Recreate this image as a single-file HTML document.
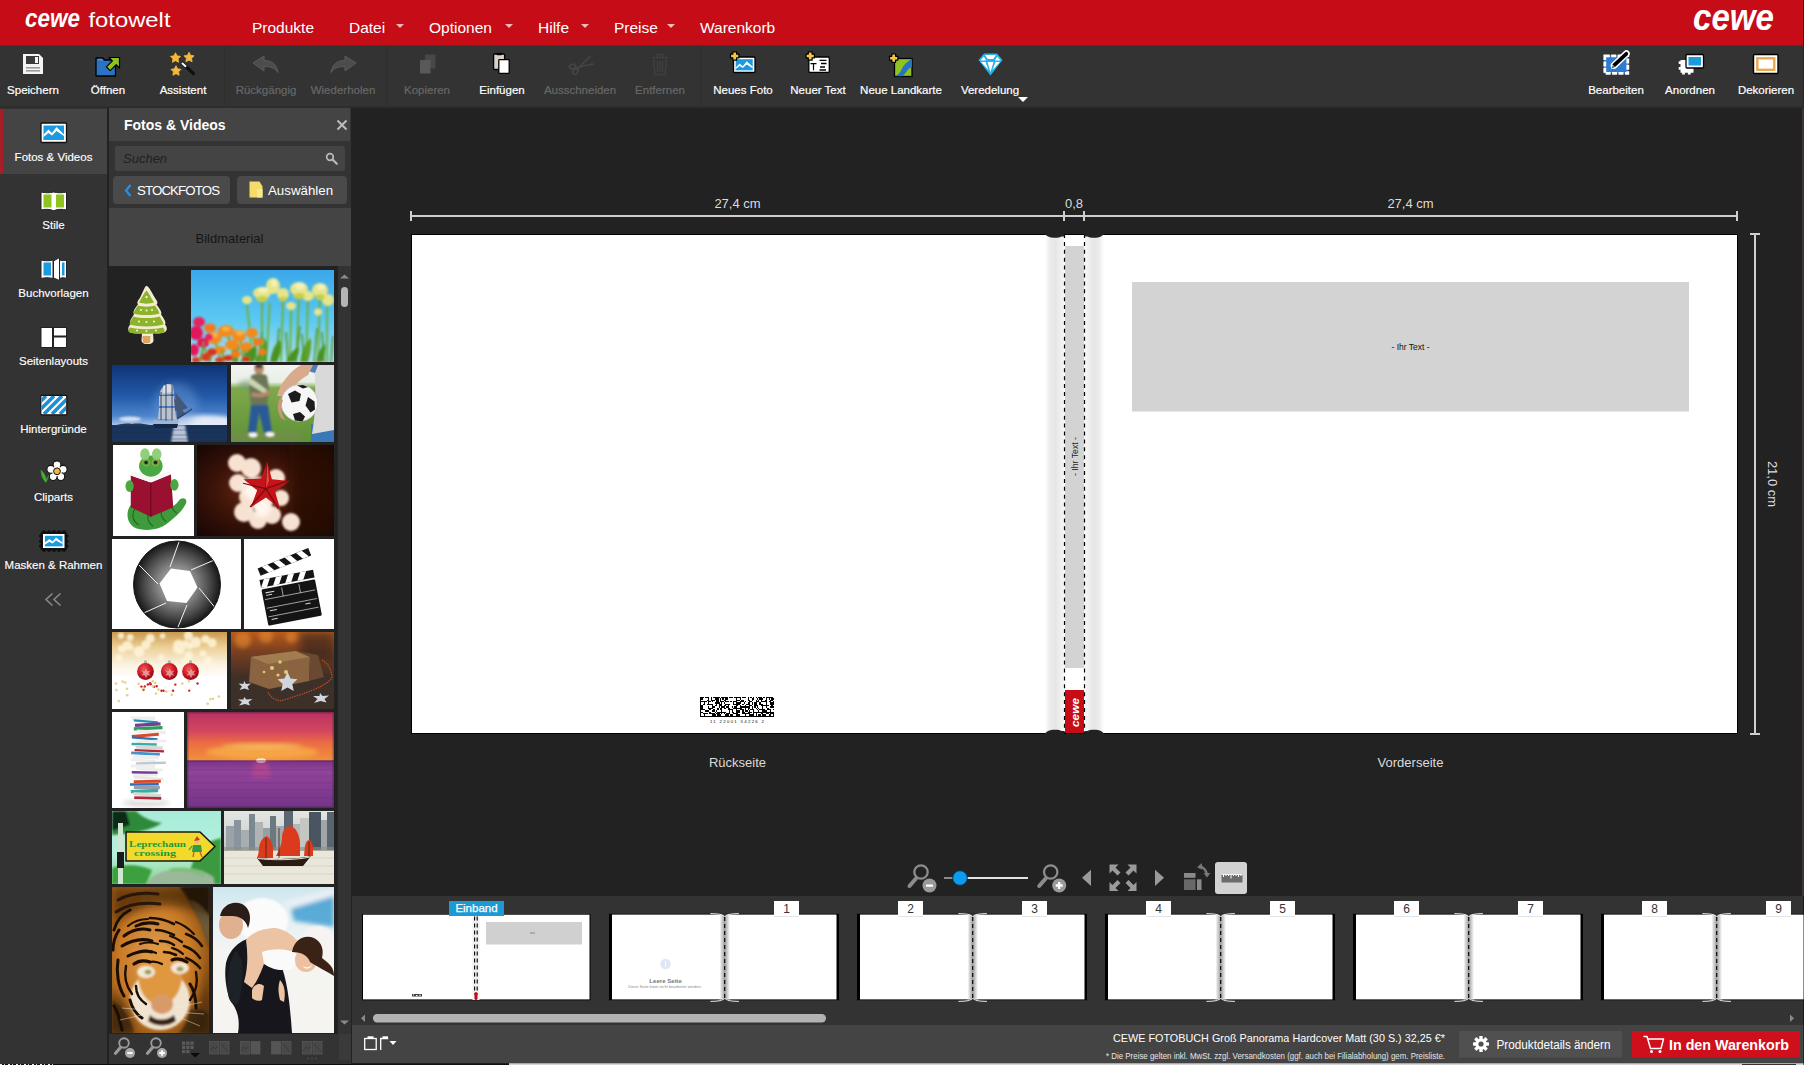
<!DOCTYPE html>
<html lang="de">
<head>
<meta charset="utf-8">
<title>CEWE Fotowelt</title>
<style>
*{box-sizing:border-box;margin:0;padding:0}
html,body{width:1804px;height:1065px;overflow:hidden;background:#222;font-family:"Liberation Sans",sans-serif;color:#fff}
.abs{position:absolute}
#app{position:relative;width:1804px;height:1065px;overflow:hidden;background:#222}
/* top bar */
#topbar{left:0;top:0;width:1804px;height:45px;background:#c60c17}
.menu{position:absolute;top:19px;font-size:15.5px;line-height:18px;color:#fff;white-space:nowrap}
.caret{position:absolute;top:24px;width:0;height:0;border-left:4px solid transparent;border-right:4px solid transparent;border-top:4px solid #f3b9bd}
/* toolbar */
#toolbar{left:0;top:45px;width:1804px;height:63px;background:#333;box-shadow:inset 0 1px 0 #7d1a1f,inset 0 -2px 0 #2d2d2d}
.tb{-webkit-text-stroke:.2px;position:absolute;top:37px;height:16px;line-height:16px;font-size:11.5px;color:#fff;text-align:center;white-space:nowrap;transform:translateX(-50%)}
.tb.dis{color:#686868}
.tbsep{position:absolute;top:2px;width:1px;height:58px;background:#2e2e2e}
.ico{position:absolute}
/* sidebar */
#sidebar{left:0;top:108px;width:107px;height:957px;background:#333}
.sb{-webkit-text-stroke:.15px;position:absolute;left:0;width:107px;text-align:center;font-size:11.5px;line-height:14px;color:#fff;white-space:nowrap}
/* panel */
#panel{left:109px;top:108px;width:242px;height:957px;background:#333}
/* canvas */
#canvas{left:352px;top:108px;width:1452px;height:788px;background:#222}
/* filmstrip */
#film{left:352px;top:896px;width:1452px;height:129px;background:#333}
/* status */
#status{left:352px;top:1025px;width:1452px;height:40px;background:#444}
</style>
</head>
<body>
<div id="app">

<!-- ===== TOP BAR ===== -->
<div id="topbar" class="abs">
  <span class="menu" style="left:252px">Produkte</span>
  <span class="menu" style="left:349px">Datei</span><i class="caret" style="left:396px"></i>
  <span class="menu" style="left:429px">Optionen</span><i class="caret" style="left:505px"></i>
  <span class="menu" style="left:538px">Hilfe</span><i class="caret" style="left:581px"></i>
  <span class="menu" style="left:614px">Preise</span><i class="caret" style="left:667px"></i>
  <span class="menu" style="left:700px">Warenkorb</span>
  <svg class="abs" style="left:0;top:0" width="1804" height="45" viewBox="0 0 1804 45" font-family="'Liberation Sans',sans-serif">
    <text x="25" y="27" font-size="25" font-weight="bold" font-style="italic" fill="#fff" textLength="55" lengthAdjust="spacingAndGlyphs">cewe</text>
    <text x="88.500" y="27" font-size="19.500" fill="#fff" textLength="82" lengthAdjust="spacingAndGlyphs">fotowelt</text>
    <text x="1693" y="30" font-size="36" font-weight="bold" font-style="italic" fill="#fff" textLength="81" lengthAdjust="spacingAndGlyphs">cewe</text>
  </svg>
</div>

<div class="abs" style="left:1803px;top:0;width:1px;height:45px;background:#5e060c;z-index:5"></div>
<div class="abs" style="left:1803px;top:45px;width:1px;height:63px;background:#262626;z-index:5"></div>
<div class="abs" style="left:1801.500px;top:108px;width:2.500px;height:788px;background:#3e3530;z-index:5"></div>
<div class="abs" style="left:1803px;top:896px;width:1px;height:169px;background:rgba(0,0,0,.45);z-index:5"></div>
<!-- ===== TOOLBAR ===== -->
<div id="toolbar" class="abs">
  <span class="tb" style="left:33px">Speichern</span>
  <span class="tb" style="left:108px">Öffnen</span>
  <span class="tb" style="left:183px">Assistent</span>
  <i class="tbsep" style="left:224px"></i>
  <span class="tb dis" style="left:266px">Rückgängig</span>
  <span class="tb dis" style="left:343px">Wiederholen</span>
  <i class="tbsep" style="left:386px"></i>
  <span class="tb dis" style="left:427px">Kopieren</span>
  <span class="tb" style="left:502px">Einfügen</span>
  <span class="tb dis" style="left:580px">Ausschneiden</span>
  <span class="tb dis" style="left:660px">Entfernen</span>
  <i class="tbsep" style="left:700px"></i>
  <span class="tb" style="left:743px">Neues Foto</span>
  <span class="tb" style="left:818px">Neuer Text</span>
  <span class="tb" style="left:901px">Neue Landkarte</span>
  <span class="tb" style="left:990px">Veredelung</span>
  <span class="tb" style="left:1616px">Bearbeiten</span>
  <span class="tb" style="left:1690px">Anordnen</span>
  <span class="tb" style="left:1766px">Dekorieren</span>
  <svg class="abs" style="left:0;top:0" width="1804" height="63" viewBox="0 45 1804 63">
    <defs>
      <path id="plus" d="M2.300 0h3.800v2.300h2.300v3.800h-2.300v2.300h-3.800v-2.300h-2.300v-3.800h2.300z" fill="#f6c443" stroke="#000" stroke-width="1.200" stroke-linejoin="round"/>
      <path id="star" d="M0.0 -5.3 1.59 -2.18 5.04 -1.64 2.57 0.83 3.12 4.29 0.0 2.7 -3.12 4.29 -2.57 0.83 -5.04 -1.64 -1.59 -2.18z" fill="#f2b93c" stroke="#f2b93c" stroke-width=".8" stroke-linejoin="round"/>
    </defs>
    <!-- save -->
    <path d="M23 54h16l4 4v16h-20z" fill="#f4f4f4"/>
    <rect x="26" y="56" width="13" height="8" fill="#3a3a3a"/>
    <rect x="35" y="57" width="3" height="6" fill="#f4f4f4"/>
    <rect x="26" y="67" width="14" height="1.6" fill="#9a9a9a"/>
    <rect x="26" y="70" width="14" height="1.6" fill="#9a9a9a"/>
    <!-- open -->
    <path d="M96 58h7l1.5 2h11v16h-19.5z" fill="#2a72c4" stroke="#000" stroke-width="1.3" stroke-linejoin="round"/>
    <rect x="98" y="58.8" width="4.5" height="1.6" fill="#5b8fd6"/>
    <path d="M109 57.500h10.500v10.500l-3.300-3.300-6 6-3.800-3.800 6-6z" fill="#8fc31f" stroke="#000" stroke-width="1.2" stroke-linejoin="round"/>
    <!-- assistant -->
    <use href="#star" x="175.500" y="58"/>
    <use href="#star" x="189" y="57.500"/>
    <use href="#star" x="176" y="71"/>
    <path d="M182.500 63.500l11 10" stroke="#111" stroke-width="3.200" stroke-linecap="round"/>
    <path d="M182.500 63.500l3 2.700" stroke="#fff" stroke-width="2" stroke-linecap="round"/>
    <!-- undo -->
    <path d="M253 63l11-7v4.500c8 0 13 4 14 12-3-4.500-7-6-14-6v4.500z" fill="#4c4c4c" stroke="#5c5c5c" stroke-width="1" stroke-linejoin="round"/>
    <!-- redo -->
    <path d="M356 63l-11-7v4.500c-8 0-13 4-14 12 3-4.500 7-6 14-6v4.500z" fill="#4c4c4c" stroke="#5c5c5c" stroke-width="1" stroke-linejoin="round"/>
    <!-- copy -->
    <rect x="425" y="54.500" width="10.500" height="14" fill="#484848"/>
    <rect x="420" y="60" width="10.500" height="13.500" fill="#595959"/>
    <!-- paste -->
    <rect x="493.600" y="54" width="11" height="15.500" rx="1" fill="#d9d2c4" stroke="#000" stroke-width="1.300"/>
    <rect x="496.500" y="52.800" width="5.500" height="2.400" rx="1" fill="#000"/>
    <rect x="498.800" y="59.600" width="10.400" height="13.800" rx="0.800" fill="#fff" stroke="#000" stroke-width="1.300"/>
    <!-- cut -->
    <g fill="none" stroke="#464646" stroke-width="1.600" stroke-linecap="round">
      <path d="M590 56.500l-13 13"/><path d="M593 64l-17 3.500"/>
      <ellipse cx="572.500" cy="66.500" rx="3.200" ry="2.200" transform="rotate(-20 572.500 66.500)"/>
      <ellipse cx="575.500" cy="71.300" rx="3.200" ry="2.200" transform="rotate(-50 575.500 71.300)"/>
    </g>
    <!-- trash -->
    <g fill="none" stroke="#3f3f3f" stroke-width="1.500">
      <path d="M652 57.500h16"/><path d="M657 57v-2.500h6v2.500"/>
      <path d="M653.500 58.500l1.500 16h10l1.500-16"/><path d="M657.500 61v11M660 61v11M662.500 61v11"/>
    </g>
    <!-- neues foto -->
    <rect x="733.500" y="57" width="21.500" height="15.500" rx="1" fill="#fff" stroke="#000" stroke-width="1.300"/>
    <rect x="735.700" y="59.200" width="17" height="11" fill="#1b9ae0"/>
    <path d="M735.700 67.500l4-4 3 2.800 4-5 6 5.500v3.400h-17z" fill="#fff"/>
    <path d="M735.700 69l4-3 3 2 4-3.600 6 3.800v2h-17z" fill="#1b9ae0"/>
    <use href="#plus" x="730.500" y="51.800"/>
    <!-- neuer text -->
    <rect x="808.800" y="57" width="20.500" height="15.300" rx="1" fill="#fff" stroke="#000" stroke-width="1.300"/>
    <path d="M810.500 63h6v1.200h-2.400v6h-1.200v-6h-2.400z" fill="#000"/>
    <path d="M819.500 60.300h7M821 63.500h5.500M820 67h5M819.500 70h6.500" stroke="#000" stroke-width="1.300"/>
    <use href="#plus" x="806" y="51.800"/>
    <!-- neue landkarte -->
    <rect x="894.500" y="58.500" width="17.500" height="18" fill="#8fc31f" stroke="#000" stroke-width="1.300"/>
    <path d="M912 59.200v8c-5 1-6 7-10 9h-7c6-2 6-8 10-12 2.500-2.500 4-4 7-5z" fill="#2a72c4"/>
    <use href="#plus" x="889.500" y="54"/>
    <!-- veredelung -->
    <path d="M984 53.500h13l5.500 6.500-12 15.500-12-15.500z" fill="#27b3ea"/>
    <path d="M985 55h11l-2.700 4h-5.600zM980.500 60.500l3.300-4 2.300 4zM1000.500 60.500l-3.300-4-2.300 4zM987.500 62h6l-3 10zM981 62h4.500l3 8zM1000 62h-4.500l-3 8z" fill="#fff"/>
    <path d="M1018 97h10l-5 5z" fill="#fff"/>
    <!-- bearbeiten -->
    <rect x="1604" y="55" width="24" height="18.500" fill="#2e7bd0"/>
    <rect x="1604.800" y="55.800" width="23" height="17.500" fill="none" stroke="#fff" stroke-width="2.800" stroke-dasharray="5 1.400"/>
    <path d="M1614 65.500l12.500-12" stroke="#fff" stroke-width="6.600" stroke-linecap="round"/>
    <path d="M1614.300 65.200l12-11.400" stroke="#000" stroke-width="3.800" stroke-linecap="round"/>
    <path d="M1611.500 68.500l1-3.500 2.500 2.500z" fill="#000" stroke="#fff" stroke-width=".8"/>
    <!-- anordnen -->
    <path d="M1680.500 60h13v12.800h-2.800v1.700h-2.800v-1.700h-3v1.700h-2.800v-1.700h-1.600v-3h-1.800v-2.800h1.800v-3h-1.800v-2.800h1.800z" fill="#fff"/>
    <rect x="1686" y="54.500" width="17.500" height="13.500" rx="1" fill="#fff" stroke="#000" stroke-width="1.300"/>
    <rect x="1688.500" y="57" width="12.500" height="8.500" fill="#1b9ae0"/>
    <!-- dekorieren -->
    <rect x="1753.500" y="54.500" width="24.500" height="19" rx="1" fill="#fff" stroke="#000" stroke-width="1.400"/>
    <rect x="1757.300" y="58.300" width="17" height="11.500" fill="#fff" stroke="#e9a94b" stroke-width="2.400"/>
  </svg>
</div>

<!-- ===== SIDEBAR ===== -->
<div id="sidebar" class="abs">
  <div class="abs" style="left:0;top:1px;width:107px;height:65px;background:#444;border-left:3px solid #a51e28"></div>
  <div class="sb" style="top:42px">Fotos &amp; Videos</div>
  <div class="sb" style="top:110px">Stile</div>
  <div class="sb" style="top:178px">Buchvorlagen</div>
  <div class="sb" style="top:246px">Seitenlayouts</div>
  <div class="sb" style="top:314px">Hintergründe</div>
  <div class="sb" style="top:382px">Cliparts</div>
  <div class="sb" style="top:450px">Masken &amp; Rahmen</div>
  <svg class="abs" style="left:0;top:0" width="107" height="520" viewBox="0 108 107 520">
    <!-- fotos -->
    <rect x="41" y="123" width="25.500" height="19.500" rx="1" fill="#fff" stroke="#111" stroke-width="1.300"/>
    <rect x="43.500" y="125.500" width="20.500" height="14.500" fill="#1b9ae0"/>
    <path d="M43.500 134.500l5-5 3.500 3.500 4.500-6 7.500 7.500v5.500h-20.500z" fill="#fff"/>
    <path d="M43.500 137l5-4 3.500 2.500 4.500-4.500 7.500 5v4h-20.500z" fill="#1b9ae0"/>
    <!-- stile -->
    <path d="M41 192c4 1 9 1 12.700 0 3.600 1 8.700 1 12.800 0v18c-4-1-9-1-12.800.8-3.700-1.800-8.700-1.800-12.700-.8z" fill="#fff" stroke="#222" stroke-width="1"/>
    <rect x="43.500" y="194.500" width="8" height="13" fill="#8fc31f"/><rect x="56" y="194.500" width="8" height="13" fill="#8fc31f"/>
    <!-- buchvorlagen -->
    <path d="M41 260c4 1 8 1 12 0v18.500c-4-1-8-1-12 0z" fill="#fff" stroke="#222" stroke-width="1"/>
    <path d="M53.500 261l6-3.500v23l-6-2.500z" fill="#fff" stroke="#222" stroke-width="1"/>
    <path d="M59.500 260c2.500.8 5 .8 7 0v18.500c-2-1-4.500-1-7 0z" fill="#fff" stroke="#222" stroke-width="1"/>
    <rect x="43.500" y="262.500" width="7.500" height="13" fill="#1b9ae0"/><rect x="62" y="262.500" width="2.500" height="13" fill="#1b9ae0"/>
    <!-- seitenlayouts -->
    <rect x="40.500" y="327" width="26.500" height="21" rx="1.200" fill="#222"/>
    <rect x="41.500" y="328" width="10.500" height="19" fill="#fff"/><rect x="54" y="328" width="12" height="7.500" fill="#fff"/><rect x="54" y="337.500" width="12" height="9.500" fill="#fff"/>
    <!-- hintergruende -->
    <clipPath id="hgc"><rect x="41.500" y="396" width="24.500" height="18"/></clipPath>
    <rect x="40.800" y="395.300" width="26" height="19.500" rx="1" fill="#fff" stroke="#111" stroke-width="1.200"/>
    <g clip-path="url(#hgc)" stroke="#1b8fd8" stroke-width="3.600"><path d="M36 414l18-18M44 414l18-18M52 414l18-18M60 414l18-18M28 414l18-18"/></g>
    <!-- cliparts -->
    <path d="M41 470c0 6 2 10 5 12.500 1.500-3 3.500-8 5.500-10-2.500 2-4 4.500-5 7-1-4-3-7.500-5.500-9.500z" fill="#4caf3a" stroke="#2e8a28" stroke-width=".8"/>
    <g fill="#fff" stroke="#111" stroke-width="1.100"><circle cx="57" cy="464.800" r="3.900"/><circle cx="63.200" cy="469.300" r="3.900"/><circle cx="60.800" cy="476.600" r="3.900"/><circle cx="53.200" cy="476.600" r="3.900"/><circle cx="50.800" cy="469.300" r="3.900"/></g>
    <circle cx="57" cy="471.300" r="5" fill="#fff"/>
    <circle cx="57" cy="471.300" r="3.400" fill="#f0b83a" stroke="#111" stroke-width="1"/>
    <!-- masken -->
    <rect x="40.500" y="531.500" width="26.500" height="19" rx="2" fill="#111"/>
    <g fill="#111"><circle cx="44" cy="531.500" r="1.600"/><circle cx="49" cy="531.500" r="1.600"/><circle cx="54" cy="531.500" r="1.600"/><circle cx="59" cy="531.500" r="1.600"/><circle cx="64" cy="531.500" r="1.600"/><circle cx="44" cy="550.500" r="1.600"/><circle cx="49" cy="550.500" r="1.600"/><circle cx="54" cy="550.500" r="1.600"/><circle cx="59" cy="550.500" r="1.600"/><circle cx="64" cy="550.500" r="1.600"/><circle cx="40.500" cy="536" r="1.600"/><circle cx="40.500" cy="541" r="1.600"/><circle cx="40.500" cy="546" r="1.600"/><circle cx="67" cy="536" r="1.600"/><circle cx="67" cy="541" r="1.600"/><circle cx="67" cy="546" r="1.600"/></g>
    <rect x="43" y="534" width="21.500" height="14" fill="#fff"/>
    <rect x="45" y="535.800" width="17.500" height="10.400" fill="#1b9ae0"/>
    <path d="M45 542.500l4.500-3.500 3 2.500 3.500-4 6.500 5v3.700h-17.500z" fill="#fff"/>
    <path d="M45 544.500l4.500-2.800 3 1.800 3.500-3 6.500 3.500v2.200h-17.500z" fill="#1b9ae0"/>
    <!-- collapse -->
    <path d="M52.500 593.500l-6.500 6 6.500 6M60.500 593.500l-6.500 6 6.500 6" fill="none" stroke="#8c8c8c" stroke-width="1.500"/>
  </svg>
</div>

<!-- ===== PANEL ===== -->
<div id="panel" class="abs">
  <div class="abs" style="left:0;top:0;width:241px;height:33px;background:#444"></div>
  <div class="abs" style="left:15px;top:8px;font-size:14px;line-height:18px;font-weight:bold;color:#fff;white-space:nowrap">Fotos &amp; Videos</div>
  <svg class="abs" style="left:227px;top:11px" width="12" height="12" viewBox="0 0 12 12"><path d="M1.500 1.500l9 9M10.500 1.500l-9 9" stroke="#bdbdbd" stroke-width="2"/></svg>
  <div class="abs" style="left:6px;top:38px;width:230px;height:25px;background:#444;border-radius:2px"></div>
  <div class="abs" style="left:14px;top:43px;font-size:13px;line-height:16px;font-style:italic;color:#1f1f1f">Suchen</div>
  <svg class="abs" style="left:216px;top:44px" width="14" height="14" viewBox="0 0 14 14"><circle cx="5" cy="5" r="3.300" fill="none" stroke="#b8b8b8" stroke-width="1.700"/><path d="M7.500 7.500l4.300 4.300" stroke="#b8b8b8" stroke-width="2.200" stroke-linecap="round"/></svg>
  <div class="abs" style="left:4px;top:68px;width:117px;height:28px;background:#4a4a4a;border-radius:4px"></div>
  <svg class="abs" style="left:15px;top:76px" width="8" height="13" viewBox="0 0 8 13"><path d="M6.500 1L2 6.500 6.500 12" fill="none" stroke="#2b8fe0" stroke-width="2.200"/></svg>
  <div class="abs" style="left:28px;top:74px;font-size:13.300px;line-height:17px;color:#fff;white-space:nowrap;letter-spacing:-.9px">STOCKFOTOS</div>
  <div class="abs" style="left:128px;top:68px;width:110px;height:28px;background:#4a4a4a;border-radius:4px"></div>
  <svg class="abs" style="left:140px;top:73px" width="14" height="17" viewBox="0 0 14 17"><path d="M.5.500h10l3 5v11h-13z" fill="#f5dc6a"/><path d="M8 8h5.500v8.500h-5.500z" fill="#f9e88e"/></svg>
  <div class="abs" style="left:159px;top:74px;font-size:13.300px;line-height:17px;color:#fff;white-space:nowrap">Auswählen</div>
  <div class="abs" style="left:0;top:100px;width:242px;height:58px;background:#444"></div>
  <div class="abs" style="left:0;top:123px;width:241px;text-align:center;font-size:13px;line-height:16px;color:#161616">Bildmaterial</div>
  <div class="abs" style="left:0;top:158px;width:242px;height:768px;background:#222"></div>
  <!-- scrollbar -->
  <div class="abs" style="left:229px;top:158px;width:13px;height:768px;background:#333"></div>
  <div class="abs" style="left:232px;top:179px;width:7px;height:20px;border-radius:3.500px;background:#b5b5b5"></div>
  <svg class="abs" style="left:231px;top:165px" width="9" height="6" viewBox="0 0 9 6"><path d="M0 5.500h9l-4.500-4z" fill="#8a8a8a"/></svg>
  <svg class="abs" style="left:231px;top:912px" width="9" height="6" viewBox="0 0 9 6"><path d="M0 .5h9l-4.500 4z" fill="#8a8a8a"/></svg>
  <svg class="abs" style="left:0;top:158px" width="229" height="768" viewBox="109 266 229 768" font-family="'Liberation Sans',sans-serif">
    <defs>
      <filter id="b1" x="-20%" y="-20%" width="140%" height="140%"><feGaussianBlur stdDeviation="1"/></filter>
      <filter id="b2" x="-20%" y="-20%" width="140%" height="140%"><feGaussianBlur stdDeviation="2.200"/></filter>
      <filter id="b4" x="-30%" y="-30%" width="160%" height="160%"><feGaussianBlur stdDeviation="4"/></filter>
      <filter id="b05"><feGaussianBlur stdDeviation=".5"/></filter>
      <clipPath id="c2"><rect x="191" y="270" width="143" height="92"/></clipPath>
      <clipPath id="c3"><rect x="112" y="365" width="115" height="77"/></clipPath>
      <clipPath id="c4"><rect x="231" y="365" width="103" height="77"/></clipPath>
      <clipPath id="c5"><rect x="113" y="445" width="81" height="91"/></clipPath>
      <clipPath id="c6"><rect x="197" y="445" width="137" height="91"/></clipPath>
      <clipPath id="c7"><rect x="112" y="539" width="129" height="90"/></clipPath>
      <clipPath id="apc"><circle cx="177" cy="584.500" r="43"/></clipPath><clipPath id="c8"><rect x="244" y="539" width="90" height="90"/></clipPath>
      <linearGradient id="sky2" x1="0" y1="0" x2="0" y2="1"><stop offset="0" stop-color="#3aa8ea"/><stop offset=".55" stop-color="#5cc9f2"/><stop offset="1" stop-color="#a8e0f0"/></linearGradient>
      <linearGradient id="sky3" x1="0" y1="0" x2="0" y2="1"><stop offset="0" stop-color="#0f3476"/><stop offset=".4" stop-color="#2259a8"/><stop offset=".66" stop-color="#4d84cc"/><stop offset=".78" stop-color="#a9c6ea"/><stop offset="1" stop-color="#a9c6ea"/></linearGradient>
      <linearGradient id="gr4" x1="0" y1="0" x2="0" y2="1"><stop offset="0" stop-color="#f2f4f2"/><stop offset=".22" stop-color="#e8efe6"/><stop offset=".3" stop-color="#7fa84a"/><stop offset="1" stop-color="#5f9238"/></linearGradient>
      <radialGradient id="bg6" cx=".45" cy=".5" r=".7"><stop offset="0" stop-color="#6a2a14"/><stop offset=".5" stop-color="#3a1208"/><stop offset="1" stop-color="#120504"/></radialGradient>
      <radialGradient id="ap" cx=".5" cy=".5" r=".5"><stop offset="0" stop-color="#b0b0b0"/><stop offset=".4" stop-color="#8c8c8c"/><stop offset=".75" stop-color="#4a4a4a"/><stop offset="1" stop-color="#161616"/></radialGradient>
    </defs>

    <!-- 1 tree cookie -->
    <g>
      <path d="M146.500 286c2 0 4 4 8.500 12 2 3 3.500 5 1.500 6.500 3 4 6 8 4.500 10 3 4 5.500 8 4 10 3 3.500 2 7-1 8-3 1.200-8 1-11 .8l.5 7c0 3-3 3.800-6 3.800s-6-.8-6-3.800l.5-7c-4 .4-9 .4-11.500-1-3-1.500-3-5 0-8-1.500-2.500 1-6 3.500-10-1.500-2.500 1-6 4-10-1.500-2 0-3.500 2-6.500 3.500-7 5-12 6.500-12z" fill="#f3ecd2"/>
      <path d="M146.500 290.500c2 2 4 6 7.500 12-4 1.500-11 1.500-15 0 3-6 5.500-10 7.500-12zM138 305.500c5 1.500 12 1.500 17 0 2.500 3.500 4 6 4.500 8-6 2-20 2-26 0 .5-2 2-4.500 4.500-8zM133.500 316.500c7 2 19 2 26 0 2.500 3.500 4 6 4 8-8 2.500-26 2.500-34 0 0-2 1.500-4.500 4-8zM130 327.500c9 2.300 24 2.300 33 0 2.500 3 2 5-1 5.500-8 1-23 1-31 0-3-.5-3.500-2.500-1-5.500z" fill="#8db32c"/>
      <path d="M142.500 336h8l-.5 6.500c0 1-7 1-7 0z" fill="#dca660"/>
      <g fill="#f3f0d8"><circle cx="146.500" cy="297" r="1.200"/><circle cx="141" cy="310" r="1.100"/><circle cx="146.500" cy="310.500" r="1.100"/><circle cx="152" cy="310" r="1.100"/><circle cx="139" cy="321.500" r="1.100"/><circle cx="146.500" cy="322" r="1.100"/><circle cx="154" cy="321.500" r="1.100"/><circle cx="137" cy="330.500" r="1"/><circle cx="146.500" cy="331" r="1"/><circle cx="156" cy="330.500" r="1"/></g>
    </g>

    <!-- 2 flowers -->
    <g clip-path="url(#c2)">
      <rect x="191" y="270" width="143" height="92" fill="url(#sky2)"/>
      <g filter="url(#b1)">
        <g stroke="#6fae2c" stroke-width="1.800" fill="none">
          <path d="M262 300v62M270 303l-4 59M283 300l-2 62M299 296l-3 66M308 300l-2 62M320 296l-2 66M327 305v57M247 305l6 57M291 310l-1 52"/>
          <path d="M215 340l6 22M228 335l8 27M240 340l4 22M254 338l2 24M204 345l4 17" stroke="#5a9a28"/>
        </g>
        <path d="M255 362c4-12 8-18 12-22 2 8 0 16-2 22zM300 362c2-14 6-20 11-24 1 9-1 17-3 24zM232 362c-2-8 0-14 3-18 3 6 4 12 3 18z" fill="#5fa02a"/>
        <g fill="#e6e58a">
          <ellipse cx="262" cy="293" rx="9" ry="6"/><ellipse cx="273" cy="286" rx="7" ry="8"/><ellipse cx="283" cy="294" rx="6" ry="6"/>
          <ellipse cx="299" cy="289" rx="9" ry="7"/><ellipse cx="308" cy="296" rx="6" ry="5"/><ellipse cx="320" cy="290" rx="8" ry="7"/><ellipse cx="328" cy="300" rx="6" ry="6"/>
          <ellipse cx="291" cy="306" rx="5" ry="4"/><ellipse cx="318" cy="312" rx="4" ry="3.500"/><ellipse cx="247" cy="300" rx="5" ry="4"/>
        </g>
        <g fill="#f4f1b8"><ellipse cx="263" cy="290" rx="5" ry="3"/><ellipse cx="300" cy="286" rx="5" ry="3.500"/><ellipse cx="321" cy="287" rx="4" ry="3"/><ellipse cx="274" cy="283" rx="3" ry="4"/></g>
        <g fill="#c7cf4a"><ellipse cx="262" cy="299" rx="6" ry="3"/><ellipse cx="299" cy="296" rx="6" ry="3"/><ellipse cx="320" cy="297" rx="5" ry="3"/><ellipse cx="283" cy="299" rx="4" ry="2.500"/></g>
        <g fill="#f58a1e">
          <ellipse cx="214" cy="338" rx="8" ry="6"/><ellipse cx="226" cy="331" rx="8" ry="6"/><ellipse cx="239" cy="336" rx="7" ry="6"/><ellipse cx="252" cy="333" rx="6" ry="5"/><ellipse cx="232" cy="345" rx="7" ry="5"/><ellipse cx="246" cy="347" rx="6" ry="5"/><ellipse cx="220" cy="350" rx="6" ry="4"/>
        </g>
        <g fill="#fbb040"><ellipse cx="226" cy="329" rx="4" ry="2.500"/><ellipse cx="240" cy="333" rx="4" ry="2.500"/><ellipse cx="214" cy="335" rx="4" ry="2.500"/></g>
        <g fill="#e3195a"><ellipse cx="196" cy="333" rx="7" ry="7"/><ellipse cx="203" cy="343" rx="6" ry="5"/><ellipse cx="194" cy="350" rx="5" ry="6"/></g>
        <g fill="#e03a20"><ellipse cx="206" cy="357" rx="6" ry="4"/><ellipse cx="220" cy="360" rx="5" ry="3"/><ellipse cx="196" cy="360" rx="4" ry="3"/></g>
        <g stroke="#4f9426" stroke-width="1.600" fill="none"><path d="M200 362l4-20M210 362l2-14M224 362l-2-12M236 362l3-16M246 362l-1-12M258 362l4-30M266 362l-2-24M276 362l3-34M288 362l-2-30M296 362l4-36M304 362l-2-28M314 362l3-34M324 362l-2-30M331 362l2-26"/></g>
        <path d="M240 362c6-10 10-14 16-16 2 6 0 11-3 16zM270 362c2-12 5-18 10-22 2 8 0 15-3 22zM286 362c4-9 8-13 13-15 1 6-2 11-5 15zM316 362c2-10 5-15 9-18 1 7-1 13-3 18z" fill="#4a9224"/>
        <g fill="#f27a1c"><ellipse cx="210" cy="328" rx="6" ry="4.500"/><ellipse cx="258" cy="342" rx="5" ry="4"/><ellipse cx="236" cy="354" rx="5" ry="3.500"/><ellipse cx="262" cy="352" rx="4" ry="3"/></g>
        <g fill="#e6245e"><ellipse cx="199" cy="322" rx="6" ry="5"/><ellipse cx="209" cy="337" rx="4" ry="3.500"/></g>
        <g fill="#d8301c"><ellipse cx="212" cy="352" rx="5" ry="3.500"/><ellipse cx="228" cy="358" rx="5" ry="3"/><ellipse cx="246" cy="359" rx="4" ry="2.500"/></g>
      </g>
    </g>

    <!-- 3 ship -->
    <g clip-path="url(#c3)">
      <rect x="112" y="365" width="115" height="77" fill="url(#sky3)"/>
      <ellipse cx="204" cy="422" rx="34" ry="7" fill="#eef2fa" opacity=".9" filter="url(#b2)"/>
      <ellipse cx="176" cy="405" rx="22" ry="22" fill="#6f9cd8" opacity=".45" filter="url(#b4)"/>
      <ellipse cx="130" cy="419" rx="11" ry="2.600" fill="#e6eef8" opacity=".85" filter="url(#b1)"/>
      <rect x="112" y="425" width="115" height="17" fill="#183258"/>
      <path d="M112 426c8-2 14-3 20-2 6-1 12 0 18 1l6 1h-44z" fill="#20385a"/>
      <path d="M174 425h11l3 17h-17z" fill="#dfe8f4" opacity=".8" filter="url(#b1)"/>
      <g stroke="#24406a" stroke-width=".7" opacity=".6"><path d="M112 430h115M112 435h115M112 439h115"/></g>
      <g filter="url(#b05)">
        <path d="M160 392c2-5 5-7 8-8l5 1 1 9-14 1zM159 396h15l1 10h-16zM159 408h16l1 11h-18z" fill="#b9c2cf"/>
        <path d="M163 386l4-2 5 1v7l-9 1z" fill="#d8dde4"/>
        <path d="M175 392l13 16-11 4zM176 404l10 10-9 5zM174 398l8 10-7 3z" fill="#44597a"/>
        <path d="M166 383v38M172 385v36M161 392v28" stroke="#1c2c48" stroke-width=".8"/>
        <path d="M177 419l15-10" stroke="#2a3a56" stroke-width="1.100"/>
        <path d="M153 420c8 1 18 1 26 0l-2 7h-22z" fill="#9fb4d0"/>
        <path d="M153 424h25l-1 4h-22z" fill="#16284a"/>
      </g>
    </g>

    <!-- 4 soccer -->
    <g clip-path="url(#c4)">
      <rect x="231" y="365" width="103" height="77" fill="url(#gr4)"/>
      <g filter="url(#b2)" opacity=".55"><ellipse cx="246" cy="385" rx="8" ry="5" fill="#6f9a78"/><rect x="231" y="432" width="70" height="10" fill="#7a8a56"/></g>
      <g filter="url(#b1)">
        <ellipse cx="259" cy="369" rx="4.800" ry="5.500" fill="#b88a6a"/>
        <path d="M255 366c1-3 7-3 8 0l-1 2h-6z" fill="#4a3a2c"/>
        <path d="M251 376c3-3 13-3 16 0l2 12-2 18h-16l-2-18z" fill="#6b7658"/>
        <path d="M251 378l16 12-2 4-16-10z" fill="#c9d6b0"/>
        <path d="M252 392c5 2 11 2 17-2l1 4c-6 4-13 4-19 2z" fill="#b58a6c"/>
        <path d="M251 405h17l4 28h-8l-5-20-3 20h-8z" fill="#2c5a96"/>
        <ellipse cx="253" cy="435" rx="4.500" ry="2.400" fill="#f6f6f6"/><ellipse cx="270" cy="434.500" rx="4.500" ry="2.400" fill="#f6f6f6"/>
      </g>
      <path d="M311 424h23v18h-23z" fill="#3a78b8"/>
      <path d="M314 365h20v65l-22 4c4-22 4-44 2-69z" fill="#d9d9d9"/>
      <path d="M302 365h16l-3 8c-5-1-10-4-13-8z" fill="#4a80b8"/>
      <path d="M277 396c3-12 12-24 24-31l12 0-5 10c-9 5-16 12-19 22z" fill="#d9ab8c"/>
      <circle cx="299.500" cy="403" r="18.300" fill="#f6f6f6"/>
      <circle cx="299.500" cy="403" r="18.300" fill="none" stroke="#c8c8c8" stroke-width=".8"/>
      <g fill="#1c1c1c"><path d="M288 394l7-3.500 6 3.500-1.500 7-8 1.500zM308 397l6.500 4.500.5 8-4.500 3-5-7zM293 414l7-2 5 4.500-2.500 5-7.500-1zM297 385.500l6-.5 5 2-5 1.500z"/></g>
      <path d="M280 398c-3 6-3 13 1 20l5 3c-5-7-6-14-3-21z" fill="#c9977a"/>
    </g>

    <!-- 5 worm -->
    <g clip-path="url(#c5)">
      <rect x="113" y="445" width="81" height="91" fill="#fff"/>
      <g transform="translate(152 492) scale(1.18) translate(-152 -494)">
      <path d="M137 503c-8 4-8 18 2 22 10 3 22 0 28-6 6-5 12-10 14-16 1-4-4-5-6-2-4 6-10 8-16 6z" fill="#3f9a3c"/>
      <path d="M139 507c-5 4-4 12 2 15M150 510c-3 5-1 11 3 13M160 508c-1 5 1 9 4 11M168 503c0 4 2 7 5 9" stroke="#1f6a24" stroke-width="1" fill="none"/>
      <ellipse cx="151" cy="472" rx="10" ry="9" fill="#4aa843"/>
      <ellipse cx="146" cy="462" rx="4" ry="5" fill="#8fd07a"/><ellipse cx="156" cy="462" rx="4" ry="5" fill="#8fd07a"/>
      <circle cx="147" cy="469" r="1.500" fill="#222"/><circle cx="155" cy="469" r="1.500" fill="#222"/>
      <circle cx="147" cy="469" r="3" fill="none" stroke="#c9a23a" stroke-width=".7"/><circle cx="155" cy="469" r="3" fill="none" stroke="#c9a23a" stroke-width=".7"/>
      <path d="M134 480l17 6 17-7 2 28-19 8-17-8z" fill="#9a1030"/>
      <path d="M134 480l17 6 17-7-1-3-16 6-16-6z" fill="#f6f6f6"/>
      <path d="M151 486v29" stroke="#6a0a20" stroke-width="1"/>
      <ellipse cx="133" cy="489" rx="3.500" ry="5" fill="#4aa843"/><ellipse cx="171" cy="488" rx="3.500" ry="5" fill="#4aa843"/>
      </g>
    </g>

    <!-- 6 red star bokeh -->
    <g clip-path="url(#c6)">
      <rect x="197" y="445" width="137" height="91" fill="url(#bg6)"/>
      <rect x="290" y="445" width="44" height="91" fill="#2a0805" opacity=".7" filter="url(#b4)"/>
      <g fill="#f7e2d2" filter="url(#b1)">
        <circle cx="237" cy="463" r="9"/><circle cx="251" cy="468" r="10"/><circle cx="238" cy="483" r="9"/><circle cx="244" cy="512" r="10"/><circle cx="258" cy="520" r="9"/><circle cx="272" cy="515" r="9"/><circle cx="291" cy="522" r="9"/><circle cx="276" cy="478" r="9"/><circle cx="262" cy="500" r="11"/><circle cx="248" cy="497" r="9"/><circle cx="281" cy="498" r="8"/>
      </g>
      <g fill="#fff6ee" filter="url(#b2)"><circle cx="255" cy="488" r="12"/><circle cx="262" cy="508" r="9"/></g>
      <g transform="translate(266 488) scale(1.180) translate(-267.500 -486)">
      <path d="M268.500 464l4 14.500 15 1.500-12.500 8.500 4.500 15-12-9.500-13 8.500 5.500-14.500-11.500-9.500 15-.5z" fill="#c4141a"/>
      <path d="M268.500 464l-1 22.500 18.500-6.500-18.500 6.500 10.500 17-10.500-17-13.500 15.500 13.500-15.500-19.500-4.500 19.500 4.500z" stroke="#7a0a0e" stroke-width="1" fill="none"/>
      <path d="M268.500 464l1.500 15.500-2.500 7z" fill="#e84a3a"/>
      </g>
    </g>

    <!-- 7 aperture -->
    <g clip-path="url(#c7)">
      <rect x="112" y="539" width="129" height="90" fill="#fff"/>
      <circle cx="177" cy="584.500" r="43.500" fill="url(#ap)"/>
      <circle cx="177" cy="584.500" r="43.500" fill="none" stroke="#1a1a1a" stroke-width="1"/>
      <path d="M171 568.500l19 2.500 7.500 16.500-11 15.500-19.500-2-7.500-17.500z" fill="#fff"/>
      <g stroke="#f2f2f2" stroke-width="1" fill="none" clip-path="url(#apc)">
        <path d="M170 567l9-25M191 570l28-12M199 588l18 22M187 605l-9 22M166 603l-29 13M158 584l-20-20"/>
      </g>
    </g>

    <!-- 8 clapper -->
    <g clip-path="url(#c8)">
      <rect x="244" y="539" width="90" height="90" fill="#fff"/>
      <g transform="translate(291 590) scale(.880) translate(-291 -594)">
      <g transform="translate(2 9) rotate(-11 290 590)">
        <rect x="257" y="578" width="62" height="42" rx="1.500" fill="#141414"/>
        <rect x="257" y="567" width="62" height="9" fill="#141414"/>
        <g fill="#fff"><path d="M262 567h7l-5 9h-7zM276 567h7l-5 9h-7zM290 567h7l-5 9h-7zM304 567h7l-5 9h-7z"/></g>
        <g stroke="#e8e8e8" stroke-width=".7"><path d="M259 590h58M259 600h58M259 610h58M280 580v10M300 580v10"/></g>
        <g fill="#d8d8d8"><rect x="261" y="582" width="10" height="1.200"/><rect x="261" y="585" width="7" height="1"/><rect x="262" y="603" width="8" height="1.200"/><rect x="262" y="613" width="7" height="1.200"/><rect x="303" y="603" width="6" height="1.200"/></g>
      </g>
      <g transform="translate(2 12) rotate(-22 258 572)">
        <rect x="257" y="556" width="62" height="9" fill="#141414"/>
        <g fill="#fff"><path d="M262 556h7l5 9h-7zM276 556h7l5 9h-7zM290 556h7l5 9h-7zM304 556h7l5 9h-7z"/></g>
        </g>
    </g>
    </g>
    <defs>
      <clipPath id="c9"><rect x="112" y="632" width="115" height="77"/></clipPath>
      <clipPath id="c10"><rect x="231" y="632" width="103" height="77"/></clipPath>
      <clipPath id="c11"><rect x="112" y="712" width="72" height="96"/></clipPath>
      <clipPath id="c12"><rect x="187" y="712" width="147" height="96"/></clipPath>
      <clipPath id="c13"><rect x="112" y="811" width="109" height="73"/></clipPath>
      <clipPath id="c14"><rect x="224" y="811" width="110" height="73"/></clipPath>
      <clipPath id="c15"><rect x="112" y="887" width="97" height="146"/></clipPath>
      <clipPath id="c16"><rect x="213" y="887" width="121" height="146"/></clipPath>
      <linearGradient id="g9" x1="0" y1="0" x2="0" y2="1"><stop offset="0" stop-color="#c99a4c"/><stop offset=".2" stop-color="#ecd098"/><stop offset=".42" stop-color="#fbf2e0"/><stop offset=".6" stop-color="#fff"/><stop offset="1" stop-color="#fff"/></linearGradient>
      <linearGradient id="g10" x1="0" y1="0" x2="0" y2="1"><stop offset="0" stop-color="#b85a1c"/><stop offset=".25" stop-color="#7a4020"/><stop offset=".55" stop-color="#463024"/><stop offset="1" stop-color="#38291f"/></linearGradient>
      <linearGradient id="g12" x1="0" y1="0" x2="0" y2="1"><stop offset="0" stop-color="#b83262"/><stop offset=".2" stop-color="#d4465e"/><stop offset=".32" stop-color="#ec6c44"/><stop offset=".5" stop-color="#f0903a"/><stop offset=".51" stop-color="#7a3488"/><stop offset=".62" stop-color="#90449a"/><stop offset="1" stop-color="#743488"/></linearGradient>
      <radialGradient id="ball" cx=".4" cy=".35" r=".7"><stop offset="0" stop-color="#ee5a5a"/><stop offset=".6" stop-color="#cc1420"/><stop offset="1" stop-color="#8a0a12"/></radialGradient>
      <linearGradient id="g13" x1="0" y1="0" x2="0" y2="1"><stop offset="0" stop-color="#a6ecd8"/><stop offset=".6" stop-color="#b8f0e0"/><stop offset="1" stop-color="#8ad08a"/></linearGradient>
      <linearGradient id="g14" x1="0" y1="0" x2="0" y2="1"><stop offset="0" stop-color="#e4e6e4"/><stop offset=".5" stop-color="#c8ccc8"/><stop offset=".55" stop-color="#d8d6c8"/><stop offset="1" stop-color="#ece8dc"/></linearGradient>
      <linearGradient id="g16" x1="0" y1="0" x2="0" y2="1"><stop offset="0" stop-color="#cfe6ee"/><stop offset=".2" stop-color="#e4f0f4"/><stop offset=".45" stop-color="#f4f4f2"/><stop offset="1" stop-color="#f6f4f0"/></linearGradient>
      <radialGradient id="g15" cx=".45" cy=".5" r=".75"><stop offset="0" stop-color="#e0a058"/><stop offset=".5" stop-color="#c87a26"/><stop offset="1" stop-color="#5a3008"/></radialGradient>
    </defs>
    <!-- 9 baubles -->
    <g clip-path="url(#c9)">
      <rect x="112" y="632" width="115" height="77" fill="url(#g9)"/>
      <g filter="url(#b1)" fill="#fff6dc" opacity=".85">
        <circle cx="150.3" cy="638.2" r="4.5"/>
        <circle cx="122.1" cy="649.0" r="3.6"/>
        <circle cx="120.5" cy="648.2" r="2.6"/>
        <circle cx="162.6" cy="636.0" r="2.8"/>
        <circle cx="161.5" cy="657.2" r="2.9"/>
        <circle cx="139.0" cy="651.6" r="5.3"/>
        <circle cx="178.6" cy="645.1" r="5.4"/>
        <circle cx="119.2" cy="658.0" r="3.4"/>
        <circle cx="130.2" cy="637.3" r="3.4"/>
        <circle cx="205.4" cy="639.1" r="4.2"/>
        <circle cx="185.6" cy="644.4" r="4.1"/>
        <circle cx="121.0" cy="635.7" r="3.1"/>
        <circle cx="190.2" cy="646.0" r="3.4"/>
        <circle cx="179.6" cy="646.7" r="3.4"/>
        <circle cx="203.0" cy="653.6" r="3.2"/>
        <circle cx="178.3" cy="648.7" r="5.1"/>
        <circle cx="195.7" cy="642.1" r="5.4"/>
        <circle cx="127.2" cy="645.7" r="4.8"/>
        <circle cx="131.0" cy="647.7" r="2.6"/>
        <circle cx="188.8" cy="655.4" r="4.2"/>
        <circle cx="212.1" cy="642.8" r="4.6"/>
        <circle cx="180.6" cy="650.2" r="3.9"/>
        <circle cx="208.1" cy="660.5" r="3.9"/>
        <circle cx="188.4" cy="635.7" r="4.6"/>
        <circle cx="186.5" cy="661.8" r="5.0"/>
        <circle cx="145.9" cy="644.8" r="4.5"/>
      </g>
      <rect x="144.0" y="660.500" width="3" height="3" fill="#b8b0a0"/><circle cx="145.5" cy="671.500" r="8.400" fill="url(#ball)"/><path d="M141.5 670l3 1.500 1.500-3 1.500 3 3-1-2 2.500 2 2.500-3-.5-1.500 3-1.500-3-3 .5 2-2.500z" fill="#f0c0c0" opacity=".7"/>
      <rect x="167.8" y="660.500" width="3" height="3" fill="#b8b0a0"/><circle cx="169.3" cy="671.500" r="8.400" fill="url(#ball)"/><path d="M165.3 670l3 1.500 1.500-3 1.500 3 3-1-2 2.500 2 2.500-3-.5-1.500 3-1.500-3-3 .5 2-2.500z" fill="#f0c0c0" opacity=".7"/>
      <rect x="189.0" y="660.500" width="3" height="3" fill="#b8b0a0"/><circle cx="190.5" cy="671.500" r="8.400" fill="url(#ball)"/><path d="M186.5 670l3 1.500 1.500-3 1.500 3 3-1-2 2.500 2 2.500-3-.5-1.500 3-1.500-3-3 .5 2-2.500z" fill="#f0c0c0" opacity=".7"/>
      <g fill="#c8242a">
        <circle cx="141.4" cy="686.6" r="1.200"/>
        <circle cx="150.1" cy="683.2" r="1.200"/>
        <circle cx="143.5" cy="689.7" r="1.200"/>
        <circle cx="147.8" cy="684.5" r="1.200"/>
        <circle cx="163.5" cy="690.7" r="1.200"/>
        <circle cx="144.8" cy="686.5" r="1.200"/>
        <circle cx="173.0" cy="690.8" r="1.200"/>
        <circle cx="189.2" cy="690.6" r="1.200"/>
        <circle cx="156.7" cy="686.2" r="1.200"/>
        <circle cx="161.5" cy="690.8" r="1.200"/>
        <circle cx="197.5" cy="683.5" r="1.200"/>
        <circle cx="150.6" cy="684.3" r="1.200"/>
        <circle cx="154.0" cy="686.8" r="1.200"/>
        <circle cx="175.3" cy="684.6" r="1.200"/>
      </g><g fill="#e8d08a">
        <circle cx="116.4" cy="690.1" r="1.300"/>
        <circle cx="155.9" cy="693.6" r="1.300"/>
        <circle cx="218.9" cy="696.6" r="1.300"/>
        <circle cx="171.7" cy="694.8" r="1.300"/>
        <circle cx="189.0" cy="681.3" r="1.300"/>
        <circle cx="213.1" cy="698.7" r="1.300"/>
        <circle cx="210.4" cy="699.1" r="1.300"/>
        <circle cx="158.4" cy="689.6" r="1.300"/>
        <circle cx="127.2" cy="695.2" r="1.300"/>
        <circle cx="122.7" cy="681.6" r="1.300"/>
        <circle cx="138.5" cy="683.9" r="1.300"/>
        <circle cx="152.7" cy="681.3" r="1.300"/>
        <circle cx="116.0" cy="683.6" r="1.300"/>
        <circle cx="127.0" cy="688.7" r="1.300"/>
        <circle cx="118.8" cy="701.0" r="1.300"/>
        <circle cx="182.3" cy="683.6" r="1.300"/>
        <circle cx="143.2" cy="688.3" r="1.300"/>
        <circle cx="155.3" cy="682.9" r="1.300"/>
        <circle cx="207.7" cy="703.8" r="1.300"/>
        <circle cx="166.3" cy="691.6" r="1.300"/>
        <circle cx="125.3" cy="682.5" r="1.300"/>
        <circle cx="153.0" cy="686.4" r="1.300"/>
      </g>
    </g>
    <!-- 10 chocolate -->
    <g clip-path="url(#c10)">
      <rect x="231" y="632" width="103" height="77" fill="url(#g10)"/>
      <g filter="url(#b2)" fill="#e88a30" opacity=".6"><circle cx="243" cy="640" r="8"/><circle cx="266" cy="636" r="7"/><circle cx="292" cy="637" r="6"/></g>
      <rect x="300" y="632" width="34" height="30" fill="#2e211a" opacity=".6" filter="url(#b4)"/>
      <path d="M231 678c30-6 70-8 103-2v33h-103z" fill="#3c3028"/>
      <g filter="url(#b05)">
        <path d="M251 657l45-6 14 6-1 24-40 8-20-7z" fill="#8a6440"/>
        <path d="M251 657l45-6 14 6-42 7z" fill="#a07c50"/>
        <path d="M296 651l22 4 6 22-15 4 1-24z" fill="#6a4a30"/>
        <g fill="#e4c878"><circle cx="272" cy="668" r="2"/><circle cx="280" cy="662" r="1.700"/><circle cx="286" cy="672" r="2"/><circle cx="278" cy="675" r="1.600"/><circle cx="264" cy="672" r="1.300"/></g>
        <path d="M322 660c6 4 10 10 10 18-8 10-30 16-48 22-6 2-14-2-16-8" fill="none" stroke="#b84a2a" stroke-width="1.300" stroke-dasharray="1.500 1"/>
      </g>
      <g fill="#d0d6dc">
        <path d="M287.500 672l3 6.500 7 .8-5.200 4.800 1.500 7-6.300-3.600-6.300 3.600 1.500-7-5.200-4.800 7-.8z"/>
        <path d="M244 681l2 3 5-.5-3.500 3 1.500 3.500-4.500-1.500-5 1.500 2.500-3.500-3.500-3 5 .5z"/>
        <path d="M244 697l2.500 2.500 6-.5-4 3 1.500 3.500-5-1.500-6 1.500 3-3.500-4-2.500 5.500 0z"/>
        <path d="M320 693l2.500 3 6.500-.5-4.500 3.500 2 3.500-6-1.500-6.500 2 3.500-4-4.500-3 6.500 0z"/>
      </g>
    </g>
    <!-- 11 books -->
    <g clip-path="url(#c11)">
      <rect x="112" y="712" width="72" height="96" fill="#fff"/>
      <ellipse cx="146" cy="803" rx="24" ry="3.500" fill="#ddd" filter="url(#b2)"/>
      <rect x="131.1" y="716.5" width="24.1" height="3.4" fill="#eee" transform="rotate(0.3 143.2 716.5)"/>
      <rect x="133.8" y="720.2" width="24.2" height="2.4" fill="#2a8fb0" transform="rotate(4.8 145.9 720.2)"/>
      <rect x="134.9" y="722.9" width="25.6" height="3.4" fill="#7a3a9a" transform="rotate(-3.3 147.7 722.9)"/>
      <rect x="133.7" y="726.6" width="28.7" height="3.3" fill="#2aa050" transform="rotate(-2.8 148.1 726.6)"/>
      <rect x="136.9" y="730.2" width="29.1" height="3.3" fill="#eee" transform="rotate(3.2 151.5 730.2)"/>
      <rect x="131.6" y="733.8" width="27.1" height="3.2" fill="#d84a2a" transform="rotate(-4.7 145.1 733.8)"/>
      <rect x="132.0" y="737.3" width="25.6" height="2.2" fill="#2a70b8" transform="rotate(4.6 144.7 737.3)"/>
      <rect x="136.6" y="739.9" width="29.9" height="2.8" fill="#eee" transform="rotate(-1.4 151.5 739.9)"/>
      <rect x="131.6" y="743.0" width="25.2" height="2.5" fill="#38b0a0" transform="rotate(1.2 144.2 743.0)"/>
      <rect x="135.9" y="745.8" width="26.9" height="3.5" fill="#d8d8d8" transform="rotate(3.0 149.3 745.8)"/>
      <rect x="134.6" y="749.6" width="29.5" height="2.3" fill="#b02a3a" transform="rotate(2.5 149.4 749.6)"/>
      <rect x="131.2" y="752.2" width="28.7" height="2.9" fill="#4a90c8" transform="rotate(3.0 145.6 752.2)"/>
      <rect x="132.8" y="755.3" width="26.4" height="3.6" fill="#eee" transform="rotate(2.2 146.0 755.3)"/>
      <rect x="130.9" y="759.2" width="24.9" height="2.4" fill="#eee" transform="rotate(3.1 143.3 759.2)"/>
      <rect x="135.8" y="761.9" width="29.9" height="2.4" fill="#c0c8d0" transform="rotate(-1.5 150.7 761.9)"/>
      <rect x="130.9" y="764.7" width="24.1" height="3.0" fill="#eee" transform="rotate(1.5 143.0 764.7)"/>
      <rect x="136.5" y="767.9" width="26.6" height="2.9" fill="#eee" transform="rotate(3.3 149.8 767.9)"/>
      <rect x="131.8" y="771.2" width="25.8" height="2.5" fill="#7a3a9a" transform="rotate(0.9 144.6 771.2)"/>
      <rect x="132.9" y="774.0" width="24.8" height="2.6" fill="#eee" transform="rotate(-1.5 145.3 774.0)"/>
      <rect x="134.1" y="776.8" width="29.4" height="2.8" fill="#e8e8e8" transform="rotate(4.2 148.8 776.8)"/>
      <rect x="133.7" y="780.0" width="27.1" height="2.9" fill="#d84a2a" transform="rotate(-0.6 147.3 780.0)"/>
      <rect x="130.0" y="783.2" width="28.8" height="2.5" fill="#2a70b8" transform="rotate(-0.3 144.4 783.2)"/>
      <rect x="133.9" y="785.9" width="26.0" height="3.2" fill="#9a9ab0" transform="rotate(0.6 146.9 785.9)"/>
      <rect x="130.7" y="789.4" width="27.4" height="3.3" fill="#38b0a0" transform="rotate(-2.2 144.4 789.4)"/>
      <rect x="133.6" y="793.0" width="27.4" height="3.3" fill="#d8d8d8" transform="rotate(4.1 147.2 793.0)"/>
      <rect x="134.3" y="796.6" width="27.0" height="2.8" fill="#b02a3a" transform="rotate(1.9 147.8 796.6)"/>
      <rect x="133.7" y="799.7" width="26.9" height="2.8" fill="#eee" transform="rotate(2.0 147.2 799.7)"/>
    </g>
    <!-- 12 sunset -->
    <g clip-path="url(#c12)">
      <rect x="187" y="712" width="147" height="96" fill="url(#g12)"/>
      <ellipse cx="262" cy="752" rx="56" ry="7" fill="#f8b04a" opacity=".75" filter="url(#b2)"/>
      <ellipse cx="262" cy="746" rx="40" ry="3" fill="#f6c868" opacity=".6" filter="url(#b2)"/>
      <ellipse cx="261" cy="760.500" rx="5" ry="2.200" fill="#fff6d8"/>
      <rect x="187" y="760.500" width="147" height="1" fill="#5a2060" opacity=".8"/>
      <path d="M254 762h14l3 16h-20z" fill="#c8488a" opacity=".55" filter="url(#b2)"/>
      <g stroke="#6a2a78" stroke-width=".6" opacity=".5"><path d="M187 770h147M187 776h147M187 783h147M187 790h147M187 798h147"/></g>
      <rect x="187" y="712" width="147" height="96" fill="none" stroke="#2a1030" stroke-opacity=".35" stroke-width="3"/>
    </g>
    <!-- 13 leprechaun sign -->
    <g clip-path="url(#c13)">
      <rect x="112" y="811" width="109" height="73" fill="url(#g13)"/>
      <g filter="url(#b1)">
        <path d="M112 811h24c6 6 14 10 26 12-10 6-22 10-50 12z" fill="#2f8a3a"/>
        <path d="M112 811h14l4 14-18 6z" fill="#0f2a12"/>
        <path d="M196 850c8-6 16-10 25-12v46h-40c8-8 12-20 15-34z" fill="#3a9a40"/>
        <path d="M112 868c12-4 28-4 40 2l-6 14h-34z" fill="#3aa03e"/>
        <path d="M148 884c2-8 14-14 34-16 14 0 26 4 32 10v6z" fill="#9ab89a"/>
        <path d="M170 870c10-2 24 0 34 6" stroke="#7ac070" stroke-width="3" fill="none"/>
      </g>
      <rect x="118" y="823" width="5" height="61" fill="#cfe6cf"/><rect x="117" y="852" width="7" height="16" fill="#1a1a1a"/>
      <path d="M126 832h74l15 14.500-15 14.500h-74z" fill="#f2da2c" stroke="#1a1a10" stroke-width="1.600" stroke-linejoin="round"/>
      <text x="129" y="846.500" font-family="'Liberation Serif',serif" font-weight="bold" font-size="8.800" fill="#1d9a3a" textLength="57" lengthAdjust="spacingAndGlyphs">Leprechaun</text>
      <text x="134" y="856" font-family="'Liberation Serif',serif" font-weight="bold" font-size="8.800" fill="#1d9a3a" textLength="42" lengthAdjust="spacingAndGlyphs">crossing</text>
      <g><circle cx="197" cy="842" r="2.200" fill="#e8b890"/><path d="M194 841l3-5 3 4z" fill="#d8382a"/><path d="M193 845h8l1 7h-10z" fill="#2f9a48"/><path d="M194 852l-1 5M200 852l2 5" stroke="#c85a30" stroke-width="1.300"/><path d="M192 846l-3 4" stroke="#2f9a48" stroke-width="1.200"/></g>
    </g>
    <!-- 14 junk boat -->
    <g clip-path="url(#c14)">
      <rect x="224" y="811" width="110" height="73" fill="url(#g14)"/>
      <g filter="url(#b05)">
        <rect x="226" y="826" width="8" height="24" fill="#9aa4a8"/>
        <rect x="234" y="820" width="7" height="30" fill="#8a949c"/>
        <rect x="241" y="830" width="8" height="20" fill="#a8aeb0"/>
        <rect x="249" y="814" width="6" height="36" fill="#7a8890"/>
        <rect x="255" y="822" width="8" height="28" fill="#b0b4b4"/>
        <rect x="263" y="828" width="7" height="22" fill="#98a0a4"/>
        <rect x="270" y="816" width="6" height="34" fill="#6a7880"/>
        <rect x="276" y="826" width="8" height="24" fill="#a4aaac"/>
        <rect x="284" y="811" width="9" height="39" fill="#5a6670"/>
        <rect x="293" y="824" width="7" height="26" fill="#b4b8b8"/>
        <rect x="300" y="818" width="9" height="32" fill="#c4c6c2"/>
        <rect x="309" y="812" width="12" height="38" fill="#4a5460"/>
        <rect x="321" y="820" width="6" height="30" fill="#a0a6a8"/>
        <rect x="327" y="812" width="7" height="38" fill="#5a6470"/>
      </g>
      <rect x="224" y="847" width="110" height="4" fill="#8a9088" opacity=".6"/>
      <rect x="224" y="851" width="110" height="33" fill="#e9e6da"/>
      <g stroke="#d4d0c4" stroke-width=".8"><path d="M224 858h110M224 866h110M224 874h110"/></g>
      <path d="M282 838c0-8 4-12 9-12 5 2 8 8 9 16l0 14h-24c3-6 6-12 6-18z" fill="#dc3a1c"/>
      <path d="M259 848c1-7 4-11 8-12 3 2 5 6 6 12l0 10h-16c1-3 2-6 2-10z" fill="#dc3a1c"/>
      <path d="M305 846c1-4 2-6 5-6 2 2 3 5 3 9v7h-9z" fill="#dc3a1c"/>
      <path d="M279 828v30M266 838v20M309 842v14" stroke="#3a2418" stroke-width=".8"/>
      <path d="M257 858l6 8h40l8-10c-10 3-40 4-54 2z" fill="#2a1a14"/><path d="M258 858.500c14 2 40 1.500 52-1.500" stroke="#e8dcc8" stroke-width="1" fill="none"/>
    </g>
    <!-- 15 tiger -->
    <g clip-path="url(#c15)">
      <rect x="112" y="887" width="97" height="146" fill="url(#g15)"/>
      <g filter="url(#b1)">
        <path d="M180 887h29v60c-6-20-14-40-29-60z" fill="#1a1208"/>
        <path d="M190 900c8 2 14 8 19 16v30c-6-18-12-32-19-46z" fill="#6a5a3a"/>
        <path d="M112 887h40c-16 8-30 20-40 36z" fill="#b86a1c"/>
        <ellipse cx="160" cy="1000" rx="30" ry="30" fill="#f0e4d0"/>
        <ellipse cx="160" cy="975" rx="22" ry="30" fill="#e09840"/>
        <ellipse cx="162" cy="1004" rx="11" ry="10" fill="#d89a68"/>
        <path d="M150 1015c6 6 16 6 24 0l2 6c-8 6-20 6-28 0z" fill="#3a2412"/>
        <ellipse cx="146" cy="972" rx="9" ry="6" fill="#f4ead8"/><ellipse cx="180" cy="968" rx="9" ry="6" fill="#f4ead8"/>
        <ellipse cx="148" cy="972" rx="3.500" ry="2.500" fill="#9a9a5a"/><ellipse cx="180" cy="969" rx="3.500" ry="2.500" fill="#9a9a5a"/>
        <path d="M112 1000c10 6 18 16 22 33h-22z" fill="#5a3a1c"/>
        <path d="M190 1010c8-2 14 0 19 4v19h-30c6-6 9-14 11-23z" fill="#4a3018"/>
      </g>
      <g filter="url(#b4)" opacity=".55"><path d="M112 887h97v30c-30-16-60-16-97 6z" fill="#2a1404"/><path d="M112 990c14 10 20 26 22 43h-22zM209 960v73h-26c14-18 22-44 26-73z" fill="#2a1404"/></g>
      <g stroke="#1a0e06" stroke-linecap="round" fill="none" filter="url(#b05)">
        <path d="M124 936c8-6 18-8 26-6M122 946c10-6 20-8 30-5M128 956c8-4 16-6 24-4M136 926c8-4 14-4 22-2" stroke-width="3"/>
        <path d="M150 918c8 0 16 2 24 6M156 930c6 0 12 2 18 5M160 941c5 0 10 1 14 4M164 952c4 0 8 1 12 3" stroke-width="2.600"/>
        <path d="M186 934c6 2 12 6 16 12M184 946c6 2 12 6 16 12M186 958c5 2 10 5 14 10" stroke-width="2.600"/>
        <path d="M118 900c10-6 24-8 40-6M116 912c12-8 26-10 44-8" stroke-width="3" stroke="#2a1608"/>
        <path d="M126 966c-2 10 0 20 6 28M136 986c0 8 4 14 10 18M196 972c2 10 0 20-6 28" stroke-width="2.400"/>
        <path d="M118 960c-2 12 0 26 6 36" stroke-width="3"/>
        <path d="M140 944c6-2 12-2 18 0M138 952c6-2 12-2 18 1M170 936c4 1 8 3 12 6M172 948c4 1 8 3 11 6M150 962c4-1 8 0 12 2M128 926c6-5 12-7 20-7M176 922c6 2 12 6 18 12" stroke-width="2.200"/>
        <path d="M114 930c2-8 8-16 16-20M113 950c0-8 2-14 6-20M190 984c4 6 6 14 6 24M130 1000c2 8 6 14 12 18M114 1006c4 6 6 14 8 24" stroke-width="3"/>
        <path d="M134 964c4-3 10-4 16-2M172 960c5-2 10-1 15 2" stroke-width="3.200"/>
      </g>
      <g stroke="#f4ecdc" stroke-width=".6" opacity=".8"><path d="M176 1008l26-6M176 1012l28 2M176 1016l24 10M146 1010l-24-2M146 1014l-26 6"/></g>
    </g>
    <!-- 16 wedding -->
    <g clip-path="url(#c16)">
      <rect x="213" y="887" width="121" height="146" fill="url(#g16)"/>
      <g filter="url(#b2)"><path d="M290 905l44-14v36l-40-6z" fill="#3a9ad0" opacity=".8"/><path d="M284 902l50-14v8l-48 14z" fill="#e8f0f4"/></g>
      <g filter="url(#b1)">
        <ellipse cx="262" cy="920" rx="26" ry="22" fill="#fbfbfb"/>
        <ellipse cx="318" cy="946" rx="18" ry="20" fill="#f6f4f2"/>
      </g>
      <g filter="url(#b05)">
        <path d="M238 944c8-6 16-8 24-6 4 10 10 18 18 24 8 20 10 44 12 71h-54c2-12 0-22-6-30-6-10-8-28-6-40 2-8 6-14 12-19z" fill="#14161c"/>
        <path d="M236 950c-8 12-10 30-8 44 1 8 6 12 10 10 4-10 6-30 4-44z" fill="#1e2028"/>
        <ellipse cx="231" cy="925" rx="12" ry="14" fill="#e0b090"/>
        <path d="M220 916c2-10 12-16 22-12 8 4 10 14 6 24-2-8-8-12-16-12-6 0-10 0-12 0z" fill="#2a1a14"/>
        <path d="M246 940c6-8 18-12 30-12 10 2 18 8 24 16l-4 10c-10 4-22 6-30 4-4 12-8 22-14 30l-8-6c4-14 4-28 2-42z" fill="#ecc4a4"/>
        <path d="M262 952c10-4 26-4 36 2l-4 14c-10 4-22 2-30-4z" fill="#fafafa"/>
        <ellipse cx="306" cy="960" rx="11" ry="12" fill="#ecc0a0"/>
        <path d="M292 952c2-12 12-18 22-14 8 4 10 12 8 20 8 6 12 10 12 18-10-6-18-10-24-14-2-6-8-10-18-10z" fill="#3a2218"/>
        <path d="M303 966c3 2 6 2 9-1-1 4-7 5-9 1z" fill="#fff"/>
        <path d="M252 990c2-6 8-8 12-4l-2 14c-4 2-8 0-10-2z" fill="#ecc4a4"/>
        <path d="M280 980c4 4 6 12 4 22l-4-2c-2-8-2-14 0-20z" fill="#ecc4a4"/>
      </g>
    </g>
  </svg>
  <svg class="abs" style="left:0;top:926px" width="242" height="31" viewBox="109 1034 242 31">
    <g id="mag2">
      <circle cx="124" cy="1043" r="4.800" fill="none" stroke="#9a9a9a" stroke-width="1.900"/>
      <path d="M120.500 1047.500l-5 5.800" stroke="#9a9a9a" stroke-width="3.200" stroke-linecap="round"/>
      <circle cx="130" cy="1053" r="5" fill="#a8a8a8"/>
    </g>
    <rect x="127.300" y="1052.100" width="5.400" height="1.800" fill="#fff"/>
    <use href="#mag2" x="32" y="0"/>
    <path d="M159.300 1053h5.400M162 1050.300v5.400" stroke="#fff" stroke-width="1.800"/>
    <g fill="#5a5a5a">
      <rect x="182" y="1041.500" width="3.300" height="3.300"/><rect x="186.200" y="1041.500" width="3.300" height="3.300"/><rect x="190.400" y="1041.500" width="3.300" height="3.300"/>
      <rect x="182" y="1045.700" width="3.300" height="3.300"/><rect x="186.200" y="1045.700" width="3.300" height="3.300"/><rect x="190.400" y="1045.700" width="3.300" height="3.300"/>
      <rect x="182" y="1049.900" width="3.300" height="3.300"/><rect x="186.200" y="1049.900" width="3.300" height="3.300"/>
    </g>
    <path d="M190.500 1053h9.500l-4.750 4.500z" fill="#0a0a0a"/>
    <g fill="#484848" stroke="#555" stroke-width=".8">
      <rect x="209.500" y="1041.500" width="9" height="12.500"/><rect x="220" y="1041.500" width="9" height="12.500"/>
      <rect x="240.500" y="1041.500" width="9" height="12.500"/><rect x="251" y="1041.500" width="9" height="12.500" fill="#555"/>
      <rect x="271.500" y="1041.500" width="9" height="12.500" fill="#555"/><rect x="282" y="1041.500" width="9" height="12.500"/>
      <rect x="302.500" y="1041.500" width="9" height="12.500"/><rect x="313" y="1041.500" width="9" height="12.500"/>
    </g>
    <g fill="none" stroke="#3a3a3a" stroke-width="1"><path d="M210 1051l3-4 2 2 3-3M221 1044l7 8M241 1051l3-4 2 2 3-3M283 1044l7 8M303 1051l3-4 2 2 3-3M314 1044l7 8"/></g>
    <g fill="#555"><circle cx="308" cy="1058.500" r=".8"/><circle cx="312" cy="1058.500" r=".8"/><circle cx="316" cy="1058.500" r=".8"/></g>
    <rect x="339" y="1034" width="12" height="26" fill="#3a3a3a"/>
  </svg>
  <div class="abs" style="left:-109px;top:955.500px;width:509px;height:2px;background:#0d0d0d"></div>
  <div class="abs" style="left:-109px;top:955.500px;width:56px;height:2px;background:repeating-linear-gradient(90deg,#e8e8e8 0 2px,#0d0d0d 2px 4px,#cfcfcf 4px 5px,#0d0d0d 5px 8px)"></div>
</div>

<!-- ===== CANVAS ===== -->
<div id="canvas" class="abs">
  <svg class="abs" style="left:0;top:0" width="1452" height="789" viewBox="352 108 1452 789" font-family="'Liberation Sans',sans-serif">
    <defs>
      <linearGradient id="shL" x1="0" x2="1" y1="0" y2="0">
        <stop offset="0" stop-color="#fff"/><stop offset=".25" stop-color="#ececec"/><stop offset=".55" stop-color="#e6e6e6"/><stop offset="1" stop-color="#f6f6f6"/>
      </linearGradient>
      <linearGradient id="shR" x1="1" x2="0" y1="0" y2="0">
        <stop offset="0" stop-color="#fff"/><stop offset=".25" stop-color="#ececec"/><stop offset=".55" stop-color="#e6e6e6"/><stop offset="1" stop-color="#f6f6f6"/>
      </linearGradient>
    </defs>
    <!-- rulers -->
    <g fill="#cfcfcf">
      <rect x="410" y="215" width="1328" height="2"/>
      <rect x="410" y="211" width="2" height="10"/>
      <rect x="1063" y="211" width="2" height="10"/>
      <rect x="1083" y="211" width="2" height="10"/>
      <rect x="1736" y="211" width="2" height="10"/>
      <rect x="1754" y="233" width="2" height="502"/>
      <rect x="1750" y="233" width="10" height="2"/>
      <rect x="1750" y="733" width="10" height="2"/>
    </g>
    <g fill="#dcdcdc" font-size="13" text-anchor="middle">
      <text x="737.500" y="208">27,4 cm</text>
      <text x="1074" y="208">0,8</text>
      <text x="1410.500" y="208">27,4 cm</text>
      <text x="737.500" y="767">Rückseite</text>
      <text x="1410.500" y="767">Vorderseite</text>
      <text transform="translate(1767.500 484) rotate(90)" x="0" y="0">21,0 cm</text>
    </g>
    <!-- page -->
    <rect x="411" y="234" width="1327" height="500" fill="#000"/>
    <rect x="412" y="235" width="1325" height="498" fill="#fff"/>
    <rect x="1045" y="235" width="19" height="498" fill="url(#shL)"/>
    <rect x="1085" y="235" width="19" height="498" fill="url(#shR)"/>
    <!-- spine -->
    <rect x="1065" y="246" width="19" height="422" fill="#d3d3d3"/>
    <rect x="1065" y="690" width="19" height="43" fill="#c60c17"/>
    <path d="M1064.500 235v498M1084.500 235v498" stroke="#000" stroke-width="1.200" stroke-dasharray="4 3.900" stroke-dashoffset="1"/>
    <text transform="translate(1078.500 727) rotate(-90)" font-size="11.500" font-weight="bold" font-style="italic" fill="#fff" textLength="29" lengthAdjust="spacingAndGlyphs">cewe</text>
    <text transform="translate(1077.800 476) rotate(-90)" font-size="9.300" fill="#222" textLength="39" lengthAdjust="spacingAndGlyphs">- Ihr Text -</text>
    <!-- notches -->
    <g fill="#222">
      <path d="M1043 233h21.500v3.500h-3c-2 1.800-10.500 1.800-13.500 0-1.500-1-3-2.500-5-3.500z"/>
      <path d="M1105.500 233h-21v3.500h3c2 1.800 10.500 1.800 13.500 0 1.500-1 3-2.500 4.500-3.500z"/>
      <path d="M1043 734.500h21.500v-3.500h-3c-2-1.800-10.500-1.800-13.500 0-1.500 1-3 2.500-5 3.500z"/>
      <path d="M1105.500 734.500h-21v-3.500h3c2-1.800 10.500-1.800 13.500 0 1.500 1 3 2.500 4.500 3.500z"/>
    </g>
    <!-- text box -->
    <rect x="1132" y="282" width="557" height="129.500" fill="#d3d3d3"/>
    <text x="1410.500" y="350" font-size="8.500" fill="#111" text-anchor="middle">- Ihr Text -</text>
    <!-- barcode -->
    <rect x="700" y="697" width="74" height="20" fill="#fff"/>
    <path d="M700.00 697.00h3.96v1.33h-3.96zM705.29 697.00h3.96v1.33h-3.96zM710.57 697.00h1.32v1.33h-1.32zM713.21 697.00h6.61v1.33h-6.61zM721.14 697.00h6.61v1.33h-6.61zM729.07 697.00h3.96v1.33h-3.96zM734.36 697.00h6.61v1.33h-6.61zM742.29 697.00h3.96v1.33h-3.96zM747.57 697.00h1.32v1.33h-1.32zM750.21 697.00h1.32v1.33h-1.32zM752.86 697.00h1.32v1.33h-1.32zM755.50 697.00h1.32v1.33h-1.32zM758.14 697.00h3.96v1.33h-3.96zM763.43 697.00h1.32v1.33h-1.32zM766.07 697.00h6.61v1.33h-6.61zM700.00 698.33h2.64v1.33h-2.64zM707.93 698.33h1.32v1.33h-1.32zM710.57 698.33h1.32v1.33h-1.32zM714.54 698.33h3.96v1.33h-3.96zM719.82 698.33h1.32v1.33h-1.32zM722.46 698.33h1.32v1.33h-1.32zM725.11 698.33h2.64v1.33h-2.64zM735.68 698.33h1.32v1.33h-1.32zM739.64 698.33h1.32v1.33h-1.32zM747.57 698.33h1.32v1.33h-1.32zM751.54 698.33h2.64v1.33h-2.64zM756.82 698.33h1.32v1.33h-1.32zM759.46 698.33h3.96v1.33h-3.96zM766.07 698.33h1.32v1.33h-1.32zM768.71 698.33h1.32v1.33h-1.32zM771.36 698.33h2.64v1.33h-2.64zM700.00 699.67h1.32v1.33h-1.32zM706.61 699.67h2.64v1.33h-2.64zM710.57 699.67h3.96v1.33h-3.96zM715.86 699.67h2.64v1.33h-2.64zM719.82 699.67h1.32v1.33h-1.32zM723.79 699.67h2.64v1.33h-2.64zM735.68 699.67h3.96v1.33h-3.96zM740.96 699.67h2.64v1.33h-2.64zM747.57 699.67h2.64v1.33h-2.64zM751.54 699.67h1.32v1.33h-1.32zM755.50 699.67h1.32v1.33h-1.32zM758.14 699.67h1.32v1.33h-1.32zM760.79 699.67h1.32v1.33h-1.32zM764.75 699.67h2.64v1.33h-2.64zM770.04 699.67h2.64v1.33h-2.64zM700.00 701.00h6.61v1.33h-6.61zM707.93 701.00h2.64v1.33h-2.64zM711.89 701.00h1.32v1.33h-1.32zM715.86 701.00h2.64v1.33h-2.64zM719.82 701.00h3.96v1.33h-3.96zM725.11 701.00h3.96v1.33h-3.96zM730.39 701.00h1.32v1.33h-1.32zM733.04 701.00h3.96v1.33h-3.96zM739.64 701.00h3.96v1.33h-3.96zM744.93 701.00h1.32v1.33h-1.32zM748.89 701.00h2.64v1.33h-2.64zM755.50 701.00h3.96v1.33h-3.96zM760.79 701.00h6.61v1.33h-6.61zM768.71 701.00h2.64v1.33h-2.64zM772.68 701.00h1.32v1.33h-1.32zM700.00 702.33h1.32v1.33h-1.32zM703.96 702.33h1.32v1.33h-1.32zM707.93 702.33h1.32v1.33h-1.32zM714.54 702.33h5.29v1.33h-5.29zM721.14 702.33h1.32v1.33h-1.32zM723.79 702.33h1.32v1.33h-1.32zM733.04 702.33h1.32v1.33h-1.32zM735.68 702.33h5.29v1.33h-5.29zM743.61 702.33h1.32v1.33h-1.32zM747.57 702.33h2.64v1.33h-2.64zM751.54 702.33h1.32v1.33h-1.32zM754.18 702.33h2.64v1.33h-2.64zM759.46 702.33h1.32v1.33h-1.32zM766.07 702.33h1.32v1.33h-1.32zM770.04 702.33h3.96v1.33h-3.96zM700.00 703.67h1.32v1.33h-1.32zM702.64 703.67h2.64v1.33h-2.64zM706.61 703.67h6.61v1.33h-6.61zM715.86 703.67h1.32v1.33h-1.32zM718.50 703.67h3.96v1.33h-3.96zM725.11 703.67h5.29v1.33h-5.29zM733.04 703.67h6.61v1.33h-6.61zM742.29 703.67h1.32v1.33h-1.32zM746.25 703.67h3.96v1.33h-3.96zM751.54 703.67h1.32v1.33h-1.32zM754.18 703.67h2.64v1.33h-2.64zM759.46 703.67h3.96v1.33h-3.96zM766.07 703.67h1.32v1.33h-1.32zM770.04 703.67h3.96v1.33h-3.96zM700.00 705.00h2.64v1.33h-2.64zM711.89 705.00h1.32v1.33h-1.32zM714.54 705.00h2.64v1.33h-2.64zM718.50 705.00h3.96v1.33h-3.96zM723.79 705.00h2.64v1.33h-2.64zM727.75 705.00h1.32v1.33h-1.32zM735.68 705.00h2.64v1.33h-2.64zM739.64 705.00h1.32v1.33h-1.32zM744.93 705.00h1.32v1.33h-1.32zM748.89 705.00h2.64v1.33h-2.64zM754.18 705.00h3.96v1.33h-3.96zM760.79 705.00h7.93v1.33h-7.93zM771.36 705.00h1.32v1.33h-1.32zM700.00 706.33h2.64v1.33h-2.64zM707.93 706.33h1.32v1.33h-1.32zM711.89 706.33h2.64v1.33h-2.64zM718.50 706.33h1.32v1.33h-1.32zM721.14 706.33h3.96v1.33h-3.96zM726.43 706.33h2.64v1.33h-2.64zM731.71 706.33h1.32v1.33h-1.32zM734.36 706.33h2.64v1.33h-2.64zM739.64 706.33h10.57v1.33h-10.57zM751.54 706.33h1.32v1.33h-1.32zM754.18 706.33h1.32v1.33h-1.32zM756.82 706.33h1.32v1.33h-1.32zM762.11 706.33h1.32v1.33h-1.32zM766.07 706.33h1.32v1.33h-1.32zM770.04 706.33h3.96v1.33h-3.96zM700.00 707.67h2.64v1.33h-2.64zM707.93 707.67h5.29v1.33h-5.29zM717.18 707.67h1.32v1.33h-1.32zM719.82 707.67h2.64v1.33h-2.64zM723.79 707.67h2.64v1.33h-2.64zM727.75 707.67h2.64v1.33h-2.64zM733.04 707.67h9.25v1.33h-9.25zM744.93 707.67h1.32v1.33h-1.32zM747.57 707.67h2.64v1.33h-2.64zM751.54 707.67h1.32v1.33h-1.32zM755.50 707.67h1.32v1.33h-1.32zM758.14 707.67h1.32v1.33h-1.32zM762.11 707.67h1.32v1.33h-1.32zM767.39 707.67h1.32v1.33h-1.32zM700.00 709.00h5.29v1.33h-5.29zM709.25 709.00h1.32v1.33h-1.32zM713.21 709.00h1.32v1.33h-1.32zM717.18 709.00h1.32v1.33h-1.32zM719.82 709.00h2.64v1.33h-2.64zM727.75 709.00h5.29v1.33h-5.29zM735.68 709.00h1.32v1.33h-1.32zM739.64 709.00h3.96v1.33h-3.96zM744.93 709.00h1.32v1.33h-1.32zM747.57 709.00h1.32v1.33h-1.32zM750.21 709.00h3.96v1.33h-3.96zM756.82 709.00h1.32v1.33h-1.32zM759.46 709.00h5.29v1.33h-5.29zM767.39 709.00h3.96v1.33h-3.96zM772.68 709.00h1.32v1.33h-1.32zM700.00 710.33h1.32v1.33h-1.32zM705.29 710.33h3.96v1.33h-3.96zM711.89 710.33h2.64v1.33h-2.64zM715.86 710.33h1.32v1.33h-1.32zM721.14 710.33h1.32v1.33h-1.32zM729.07 710.33h1.32v1.33h-1.32zM731.71 710.33h1.32v1.33h-1.32zM735.68 710.33h3.96v1.33h-3.96zM742.29 710.33h1.32v1.33h-1.32zM744.93 710.33h2.64v1.33h-2.64zM748.89 710.33h1.32v1.33h-1.32zM752.86 710.33h1.32v1.33h-1.32zM758.14 710.33h1.32v1.33h-1.32zM762.11 710.33h5.29v1.33h-5.29zM770.04 710.33h1.32v1.33h-1.32zM700.00 711.67h2.64v1.33h-2.64zM709.25 711.67h1.32v1.33h-1.32zM714.54 711.67h1.32v1.33h-1.32zM717.18 711.67h9.25v1.33h-9.25zM729.07 711.67h1.32v1.33h-1.32zM731.71 711.67h2.64v1.33h-2.64zM735.68 711.67h3.96v1.33h-3.96zM742.29 711.67h2.64v1.33h-2.64zM747.57 711.67h3.96v1.33h-3.96zM752.86 711.67h21.14v1.33h-21.14zM700.00 713.00h1.32v1.33h-1.32zM702.64 713.00h5.29v1.33h-5.29zM709.25 713.00h5.29v1.33h-5.29zM715.86 713.00h3.96v1.33h-3.96zM721.14 713.00h1.32v1.33h-1.32zM723.79 713.00h1.32v1.33h-1.32zM726.43 713.00h3.96v1.33h-3.96zM733.04 713.00h5.29v1.33h-5.29zM742.29 713.00h7.93v1.33h-7.93zM752.86 713.00h1.32v1.33h-1.32zM755.50 713.00h1.32v1.33h-1.32zM760.79 713.00h2.64v1.33h-2.64zM766.07 713.00h2.64v1.33h-2.64zM770.04 713.00h3.96v1.33h-3.96zM700.00 714.33h1.32v1.33h-1.32zM703.96 714.33h1.32v1.33h-1.32zM711.89 714.33h3.96v1.33h-3.96zM717.18 714.33h3.96v1.33h-3.96zM725.11 714.33h3.96v1.33h-3.96zM730.39 714.33h2.64v1.33h-2.64zM735.68 714.33h3.96v1.33h-3.96zM744.93 714.33h1.32v1.33h-1.32zM748.89 714.33h5.29v1.33h-5.29zM755.50 714.33h1.32v1.33h-1.32zM758.14 714.33h2.64v1.33h-2.64zM762.11 714.33h3.96v1.33h-3.96zM768.71 714.33h2.64v1.33h-2.64zM772.68 714.33h1.32v1.33h-1.32zM700.00 715.67h74.00v1.33h-74.00z" fill="#000" shape-rendering="crispEdges"/>
    <text x="737" y="722.500" font-size="4.400" fill="#111" text-anchor="middle" textLength="54" lengthAdjust="spacing">11 22001 54226 2</text>
    <!-- zoom controls -->
    <g id="mag">
      <circle cx="921" cy="872" r="6.700" fill="none" stroke="#8c8c8c" stroke-width="2.300"/>
      <path d="M916 878.500l-6.500 7.500" stroke="#8c8c8c" stroke-width="4" stroke-linecap="round"/>
      <circle cx="929.500" cy="885.500" r="7" fill="#9a9a9a"/>
    </g>
    <rect x="926" y="884.400" width="7" height="2.300" rx=".6" fill="#fff"/>
    <use href="#mag" x="129.700" y="0"/>
    <path d="M1055.700 885.500h7M1059.200 882v7" stroke="#fff" stroke-width="2.300"/>
    <rect x="944" y="877" width="16" height="2" fill="#8a8a8a"/>
    <rect x="960" y="877" width="68" height="2" fill="#e2e2e2"/>
    <circle cx="960" cy="878" r="7.300" fill="#0d9bf0" stroke="#0b3a5a" stroke-width="1"/>
    <path d="M1091 869.700v16.300l-9-8.150z" fill="#9a9a9a"/>
    <path d="M1155 869.700v16.300l9-8.150z" fill="#9a9a9a"/>
    <g fill="#9a9a9a">
      <path d="M1109.500 864.500h9l-3 3 5 5-3 3-5-5-3 3z"/>
      <path d="M1136.500 864.500v9l-3-3-5 5-3-3 5-5-3-3z"/>
      <path d="M1109.500 891v-9l3 3 5-5 3 3-5 5 3 3z"/>
      <path d="M1136.500 891h-9l3-3-5-5 3-3 5 5 3-3z"/>
    </g>
    <rect x="1184" y="873" width="11.500" height="4.800" fill="#8a8a8a"/>
    <rect x="1184" y="879.300" width="11.500" height="10.700" fill="#686868"/>
    <rect x="1197" y="879.300" width="4.500" height="10.700" fill="#8a8a8a"/>
    <path d="M1199 866c4 1 7 4 8 8.500" fill="none" stroke="#777" stroke-width="2.400"/>
    <path d="M1197 867.500l5-4.500v6.500zM1203.500 873h7l-3.500 4.500z" fill="#777"/>
    <rect x="1215" y="862" width="32" height="32" rx="3" fill="#d2d2d2"/>
    <rect x="1221.500" y="874" width="21" height="8.500" fill="#6a6a6a"/>
    <path d="M1223.500 874v3M1226 874v2M1228.500 874v2M1231 874v4.500M1233.500 874v2M1236 874v2M1238.500 874v3M1241 874v2" stroke="#fff" stroke-width="1"/>
    <rect x="1221.500" y="874" width="21" height="1" fill="#f4f4f4"/>
  </svg>
</div>

<!-- ===== FILMSTRIP ===== -->
<div id="film" class="abs">
  <svg class="abs" style="left:0;top:0" width="1452" height="129" viewBox="352 896 1452 129" font-family="'Liberation Sans',sans-serif">
    <defs>
      <linearGradient id="gut" x1="0" x2="1" y1="0" y2="0">
        <stop offset="0" stop-color="#fff"/><stop offset=".3" stop-color="#c4c4c4"/><stop offset=".5" stop-color="#9c9c9c"/><stop offset=".7" stop-color="#c4c4c4"/><stop offset="1" stop-color="#fff"/>
      </linearGradient>
      <g id="spread">
        <rect x="-1" y="913.800" width="230" height="86.400" fill="#000"/>
        <rect x="2" y="914.600" width="224.500" height="84.800" fill="#fff"/>
        <rect x="109.500" y="914.600" width="10.500" height="84.800" fill="url(#gut)"/>
        <path d="M114.700 917v82" stroke="#000" stroke-width="1.150" stroke-dasharray="4 3"/>
        <path d="M100.500 913.600c8 .2 13 .8 14.200 3.200 1.200-2.400 6.200-3 14.200-3.200M100.500 1001.400c8-.2 13-.8 14.200-3.200 1.200 2.400 6.200 3 14.200 3.200" fill="none" stroke="#f0f0f0" stroke-width="1"/>
        <path d="M111.500 914h6.400l-1.500.8c-.8.400-1.300.9-1.700 1.800-.4-.9-.9-1.400-1.700-1.800zM111.500 1001h6.400l-1.500-.8c-.8-.4-1.300-.9-1.700-1.800-.4.900-.9 1.400-1.700 1.800z" fill="#333"/>
      </g>
      <g id="lbl"><rect x="-12.500" y="901" width="25" height="15.600" fill="#fff"/><rect x="-12.500" y="916" width="25" height=".7" fill="#d8d8d8"/></g>
    </defs>
    <rect x="362" y="914" width="228.500" height="86.300" fill="#000"/>
    <rect x="363" y="914.700" width="226.500" height="84.700" fill="#fff"/>
    <rect x="486" y="922" width="96" height="22.500" fill="#d0d0d0"/>
    <rect x="530" y="932.500" width="5" height="1" fill="#888"/>
    <rect x="472.500" y="915" width="7" height="85" fill="#f0f0f0"/>
    <path d="M474.600 916.500v78M477.200 916.500v78" stroke="#000" stroke-width="1.100" stroke-dasharray="4 3"/>
    <rect x="474.500" y="992" width="3" height="8" rx="1.500" fill="#c60c17"/>
    <path d="M412 994h10v2.500h-10z" fill="#000" fill-opacity=".75"/><path d="M413 994.500h1v1h-1zM416 995h1.500v1h-1.500zM419.500 994.500h1v1.500h-1z" fill="#fff"/>
    <rect x="449" y="901" width="55" height="15" fill="#1b9ad6"/>
    <text x="476.500" y="912" font-size="11.500" fill="#fff" stroke="#fff" stroke-width=".25" text-anchor="middle">Einband</text>
    <use href="#spread" x="610" y="0"/>
    <use href="#spread" x="858" y="0"/>
    <use href="#spread" x="1106" y="0"/>
    <use href="#spread" x="1354" y="0"/>
    <use href="#spread" x="1602" y="0"/>
    <circle cx="665.500" cy="964" r="5.200" fill="#dfe7f5"/><rect x="665" y="961" width="1" height="6" fill="#f6f8fc"/>
    <text x="649.300" y="983.300" font-size="5.600" font-weight="bold" fill="#777" textLength="32.500" lengthAdjust="spacingAndGlyphs">Leere Seite</text>
    <text x="628.300" y="987.600" font-size="3.600" fill="#8a8a8a" textLength="73.500" lengthAdjust="spacingAndGlyphs">Diese Seite kann nicht bearbeitet werden.</text>
    <use href="#lbl" x="786.5" y="0"/><text x="786.5" y="912.500" font-size="12" fill="#333" text-anchor="middle">1</text>
    <use href="#lbl" x="910.5" y="0"/><text x="910.5" y="912.500" font-size="12" fill="#333" text-anchor="middle">2</text>
    <use href="#lbl" x="1034.5" y="0"/><text x="1034.5" y="912.500" font-size="12" fill="#333" text-anchor="middle">3</text>
    <use href="#lbl" x="1158.5" y="0"/><text x="1158.5" y="912.500" font-size="12" fill="#333" text-anchor="middle">4</text>
    <use href="#lbl" x="1282.5" y="0"/><text x="1282.5" y="912.500" font-size="12" fill="#333" text-anchor="middle">5</text>
    <use href="#lbl" x="1406.5" y="0"/><text x="1406.5" y="912.500" font-size="12" fill="#333" text-anchor="middle">6</text>
    <use href="#lbl" x="1530.5" y="0"/><text x="1530.5" y="912.500" font-size="12" fill="#333" text-anchor="middle">7</text>
    <use href="#lbl" x="1654.5" y="0"/><text x="1654.5" y="912.500" font-size="12" fill="#333" text-anchor="middle">8</text>
    <use href="#lbl" x="1778.5" y="0"/><text x="1778.5" y="912.500" font-size="12" fill="#333" text-anchor="middle">9</text>
    <rect x="373" y="1014" width="453" height="8.500" rx="4.200" fill="#b2b2b2"/>
    <path d="M365 1014.500v7.500l-4-3.750z" fill="#8a8a8a"/>
    <path d="M1790 1014.500v7.500l4-3.750z" fill="#8a8a8a"/>
  </svg>
</div>

<!-- ===== STATUS ===== -->
<div id="status" class="abs">
  <svg class="abs" style="left:0;top:0" width="1452" height="40" viewBox="352 1025 1452 40" font-family="'Liberation Sans',sans-serif">
    <!-- page icon -->
    <g fill="none" stroke="#fff" stroke-width="1.300">
      <rect x="364.700" y="1038.500" width="11.500" height="11"/><path d="M380.700 1050v-11.500h7.500"/>
    </g>
    <rect x="367.500" y="1036.300" width="6" height="2.400" fill="#fff"/><rect x="382.500" y="1036.300" width="5.500" height="2.400" fill="#fff"/>
    <path d="M389.500 1041h7l-3.500 4z" fill="#fff"/>
    <!-- texts -->
    <text x="1113" y="1041.500" font-size="11.500" fill="#fff" textLength="332" lengthAdjust="spacingAndGlyphs">CEWE FOTOBUCH Groß Panorama Hardcover Matt (30 S.) 32,25 €*</text>
    <text x="1106" y="1058.500" font-size="8.600" fill="#e6e6e6" textLength="339" lengthAdjust="spacingAndGlyphs">* Die Preise gelten inkl. MwSt. zzgl. Versandkosten (ggf. auch bei Filialabholung) gem. Preisliste.</text>
    <!-- buttons -->
    <rect x="1459" y="1031" width="163" height="26.500" fill="#505050"/>
    <g transform="translate(1481 1044)">
      <g fill="#fff">
        <circle r="5.600"/>
        <g id="teeth"><rect x="-1.700" y="-8" width="3.400" height="16" rx=".6"/><rect x="-1.700" y="-8" width="3.400" height="16" rx=".6" transform="rotate(45)"/><rect x="-1.700" y="-8" width="3.400" height="16" rx=".6" transform="rotate(90)"/><rect x="-1.700" y="-8" width="3.400" height="16" rx=".6" transform="rotate(135)"/></g>
      </g>
      <circle r="2.600" fill="#505050"/>
    </g>
    <text x="1496.500" y="1048.500" font-size="12" fill="#fff" textLength="114" lengthAdjust="spacingAndGlyphs">Produktdetails ändern</text>
    <rect x="1632" y="1031" width="168" height="26.500" fill="#cf0f1b"/>
    <g fill="none" stroke="#fff" stroke-width="1.500" stroke-linejoin="round" stroke-linecap="round">
      <path d="M1644 1036.500h3l3.500 12h10.500l2.500-9.500h-15"/>
    </g>
    <circle cx="1651.500" cy="1051.500" r="1.500" fill="#fff"/><circle cx="1660" cy="1051.500" r="1.500" fill="#fff"/>
    <text x="1669" y="1049.500" font-size="14" font-weight="bold" fill="#fff" textLength="120" lengthAdjust="spacingAndGlyphs">In den Warenkorb</text>
    <rect x="352" y="1063.300" width="157" height="2" fill="#111"/>
    <rect x="509" y="1063.300" width="1295" height="2" fill="#d6d6d6"/>
    <rect x="1742" y="1064" width="54" height="1" fill="#333"/>
  </svg>
</div>

</div>
</body>
</html>
